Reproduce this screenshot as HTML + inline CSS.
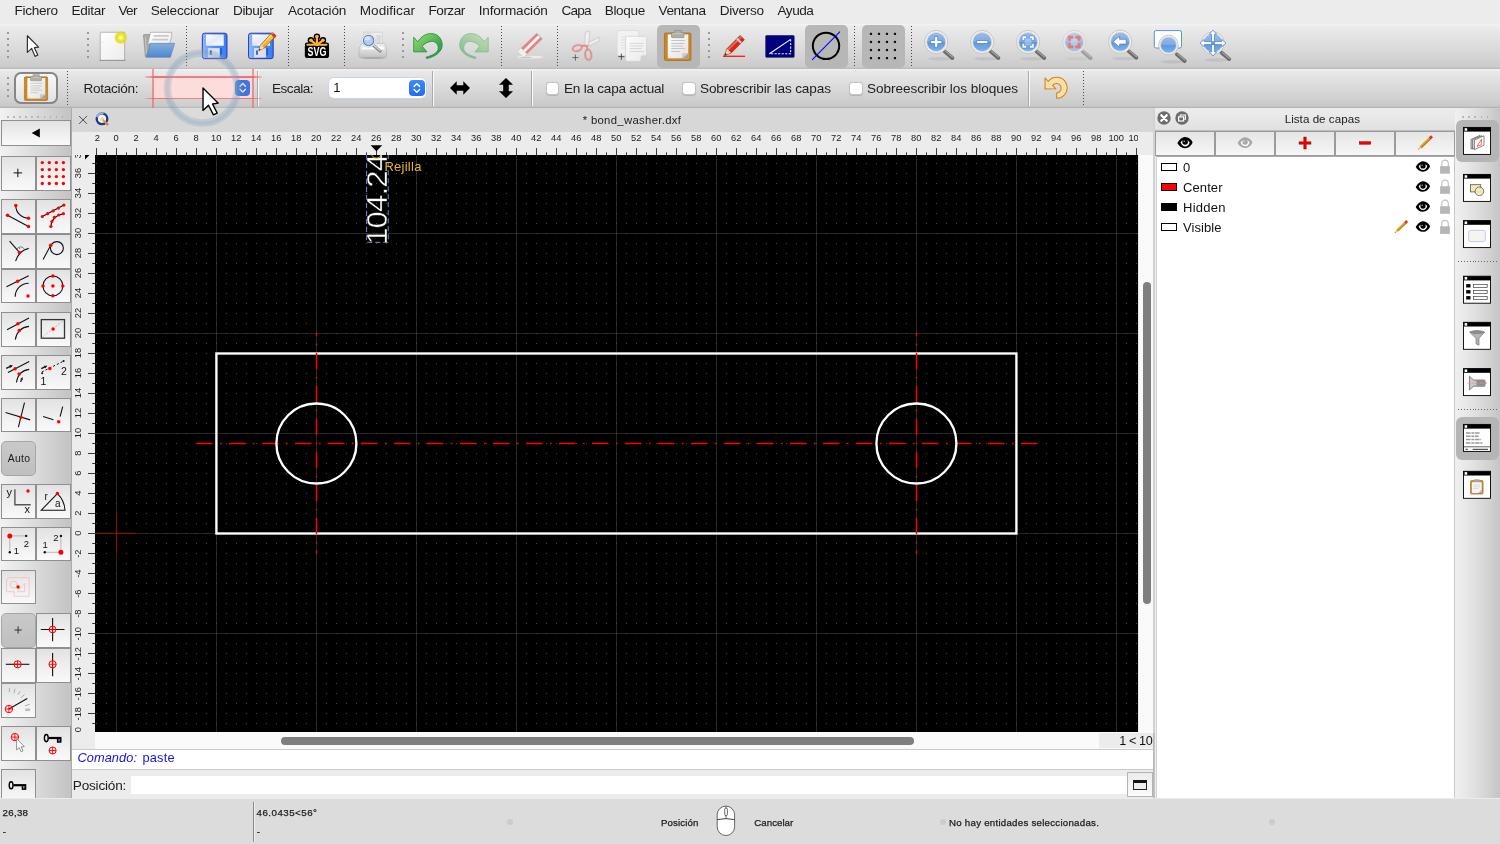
<!DOCTYPE html>
<html lang="es"><head><meta charset="utf-8"><title>QCAD - bond_washer.dxf</title><style>
html,body{margin:0;padding:0;}
body{width:1500px;height:844px;overflow:hidden;background:#ececec;font-family:"Liberation Sans",sans-serif;position:relative;}
#app{position:absolute;left:0;top:0;width:1500px;height:844px;overflow:hidden;will-change:transform;}
.t{position:absolute;white-space:nowrap;line-height:1;}
svg{position:absolute;overflow:visible;}
svg text{font-family:"Liberation Sans",sans-serif;}
</style></head><body><div id="app">
<div style="position:absolute;left:0px;top:0px;width:1500px;height:23px;background:#ececec;"></div>
<span class="t" style="left:14.60px;top:4.49px;font-size:13.60px;letter-spacing:-0.292px;color:#1e1e1e;">Fichero</span>
<span class="t" style="left:71.40px;top:4.49px;font-size:13.60px;letter-spacing:-0.266px;color:#1e1e1e;">Editar</span>
<span class="t" style="left:118.50px;top:4.49px;font-size:13.60px;letter-spacing:-0.707px;color:#1e1e1e;">Ver</span>
<span class="t" style="left:150.70px;top:4.49px;font-size:13.60px;letter-spacing:-0.246px;color:#1e1e1e;">Seleccionar</span>
<span class="t" style="left:233.00px;top:4.49px;font-size:13.60px;letter-spacing:-0.364px;color:#1e1e1e;">Dibujar</span>
<span class="t" style="left:287.90px;top:4.49px;font-size:13.60px;letter-spacing:-0.153px;color:#1e1e1e;">Acotación</span>
<span class="t" style="left:359.80px;top:4.49px;font-size:13.60px;letter-spacing:0.004px;color:#1e1e1e;">Modificar</span>
<span class="t" style="left:428.60px;top:4.49px;font-size:13.60px;letter-spacing:-0.539px;color:#1e1e1e;">Forzar</span>
<span class="t" style="left:478.70px;top:4.49px;font-size:13.60px;letter-spacing:-0.186px;color:#1e1e1e;">Información</span>
<span class="t" style="left:561.60px;top:4.49px;font-size:13.60px;letter-spacing:-0.871px;color:#1e1e1e;">Capa</span>
<span class="t" style="left:604.70px;top:4.49px;font-size:13.60px;letter-spacing:-0.350px;color:#1e1e1e;">Bloque</span>
<span class="t" style="left:658.50px;top:4.49px;font-size:13.60px;letter-spacing:-0.403px;color:#1e1e1e;">Ventana</span>
<span class="t" style="left:719.80px;top:4.49px;font-size:13.60px;letter-spacing:-0.317px;color:#1e1e1e;">Diverso</span>
<span class="t" style="left:777.50px;top:4.49px;font-size:13.60px;letter-spacing:-0.479px;color:#1e1e1e;">Ayuda</span>
<div style="position:absolute;left:0px;top:23.5px;width:1500px;height:45.5px;background:linear-gradient(#f5f5f5 0%,#ececec 4%,#dcdcdc 50%,#cbcbcb 96%,#b3b3b3 100%);"></div>
<div style="position:absolute;left:0px;top:69px;width:1500px;height:38.5px;background:linear-gradient(#f5f5f5 0%,#e9e9e9 5%,#d9d9d9 50%,#c9c9c9 95%,#adadad 100%);"></div>
<div style="position:absolute;left:6.9px;top:31.9px;width:2.2px;height:2.2px;background:#929292;border-radius:0.6px"></div><div style="position:absolute;left:6.9px;top:37.9px;width:2.2px;height:2.2px;background:#929292;border-radius:0.6px"></div><div style="position:absolute;left:6.9px;top:43.9px;width:2.2px;height:2.2px;background:#929292;border-radius:0.6px"></div><div style="position:absolute;left:6.9px;top:49.9px;width:2.2px;height:2.2px;background:#929292;border-radius:0.6px"></div><div style="position:absolute;left:6.9px;top:55.9px;width:2.2px;height:2.2px;background:#929292;border-radius:0.6px"></div>
<div style="position:absolute;left:86.9px;top:31.9px;width:2.2px;height:2.2px;background:#929292;border-radius:0.6px"></div><div style="position:absolute;left:86.9px;top:37.9px;width:2.2px;height:2.2px;background:#929292;border-radius:0.6px"></div><div style="position:absolute;left:86.9px;top:43.9px;width:2.2px;height:2.2px;background:#929292;border-radius:0.6px"></div><div style="position:absolute;left:86.9px;top:49.9px;width:2.2px;height:2.2px;background:#929292;border-radius:0.6px"></div><div style="position:absolute;left:86.9px;top:55.9px;width:2.2px;height:2.2px;background:#929292;border-radius:0.6px"></div>
<div style="position:absolute;left:401.8px;top:31.9px;width:2.2px;height:2.2px;background:#929292;border-radius:0.6px"></div><div style="position:absolute;left:401.8px;top:37.9px;width:2.2px;height:2.2px;background:#929292;border-radius:0.6px"></div><div style="position:absolute;left:401.8px;top:43.9px;width:2.2px;height:2.2px;background:#929292;border-radius:0.6px"></div><div style="position:absolute;left:401.8px;top:49.9px;width:2.2px;height:2.2px;background:#929292;border-radius:0.6px"></div><div style="position:absolute;left:401.8px;top:55.9px;width:2.2px;height:2.2px;background:#929292;border-radius:0.6px"></div>
<div style="position:absolute;left:707.9px;top:31.9px;width:2.2px;height:2.2px;background:#929292;border-radius:0.6px"></div><div style="position:absolute;left:707.9px;top:37.9px;width:2.2px;height:2.2px;background:#929292;border-radius:0.6px"></div><div style="position:absolute;left:707.9px;top:43.9px;width:2.2px;height:2.2px;background:#929292;border-radius:0.6px"></div><div style="position:absolute;left:707.9px;top:49.9px;width:2.2px;height:2.2px;background:#929292;border-radius:0.6px"></div><div style="position:absolute;left:707.9px;top:55.9px;width:2.2px;height:2.2px;background:#929292;border-radius:0.6px"></div>
<div style="position:absolute;left:186px;top:26px;width:1px;height:40.5px;background:repeating-linear-gradient(#484848 0 1.3px,transparent 1.3px 3px);"></div>
<div style="position:absolute;left:288px;top:26px;width:1px;height:40.5px;background:repeating-linear-gradient(#484848 0 1.3px,transparent 1.3px 3px);"></div>
<div style="position:absolute;left:344px;top:26px;width:1px;height:40.5px;background:repeating-linear-gradient(#484848 0 1.3px,transparent 1.3px 3px);"></div>
<div style="position:absolute;left:501px;top:26px;width:1px;height:40.5px;background:repeating-linear-gradient(#484848 0 1.3px,transparent 1.3px 3px);"></div>
<div style="position:absolute;left:557px;top:26px;width:1px;height:40.5px;background:repeating-linear-gradient(#484848 0 1.3px,transparent 1.3px 3px);"></div>
<div style="position:absolute;left:854px;top:26px;width:1px;height:40.5px;background:repeating-linear-gradient(#484848 0 1.3px,transparent 1.3px 3px);"></div>
<div style="position:absolute;left:911px;top:26px;width:1px;height:40.5px;background:repeating-linear-gradient(#484848 0 1.3px,transparent 1.3px 3px);"></div>
<div style="position:absolute;left:6.9px;top:76.9px;width:2.2px;height:2.2px;background:#929292;border-radius:0.6px"></div><div style="position:absolute;left:6.9px;top:82.9px;width:2.2px;height:2.2px;background:#929292;border-radius:0.6px"></div><div style="position:absolute;left:6.9px;top:88.9px;width:2.2px;height:2.2px;background:#929292;border-radius:0.6px"></div><div style="position:absolute;left:6.9px;top:94.9px;width:2.2px;height:2.2px;background:#929292;border-radius:0.6px"></div>
<div style="position:absolute;left:67px;top:71px;width:1px;height:35px;background:repeating-linear-gradient(#484848 0 1.3px,transparent 1.3px 3px);"></div>
<div style="position:absolute;left:1083px;top:71px;width:1px;height:35px;background:repeating-linear-gradient(#484848 0 1.3px,transparent 1.3px 3px);"></div>
<div style="position:absolute;left:257px;top:71px;width:1px;height:35px;background:#aaa;"></div><div style="position:absolute;left:258px;top:71px;width:1px;height:35px;background:#fafafa;"></div>
<div style="position:absolute;left:432px;top:71px;width:1px;height:35px;background:#aaa;"></div><div style="position:absolute;left:433px;top:71px;width:1px;height:35px;background:#fafafa;"></div>
<div style="position:absolute;left:531px;top:71px;width:1px;height:35px;background:#aaa;"></div><div style="position:absolute;left:532px;top:71px;width:1px;height:35px;background:#fafafa;"></div>
<div style="position:absolute;left:1028px;top:71px;width:1px;height:35px;background:#aaa;"></div><div style="position:absolute;left:1029px;top:71px;width:1px;height:35px;background:#fafafa;"></div>
<div style="position:absolute;left:657px;top:25px;width:43px;height:43px;background:#b7b7b7;border-radius:5px;"></div>
<div style="position:absolute;left:805px;top:25px;width:43px;height:43px;background:#b7b7b7;border-radius:5px;"></div>
<div style="position:absolute;left:862px;top:25px;width:43px;height:43px;background:#b7b7b7;border-radius:5px;"></div>
<span class="t" style="left:83.50px;top:82.49px;font-size:13.60px;letter-spacing:-0.307px;color:#1e1e1e;">Rotación:</span>
<span class="t" style="left:272.00px;top:82.29px;font-size:13.60px;letter-spacing:-0.500px;color:#1e1e1e;">Escala:</span>
<span class="t" style="left:564.00px;top:81.69px;font-size:13.60px;letter-spacing:-0.246px;color:#1e1e1e;">En la capa actual</span>
<span class="t" style="left:700.00px;top:81.69px;font-size:13.60px;letter-spacing:-0.133px;color:#1e1e1e;">Sobrescribir las capas</span>
<span class="t" style="left:867.00px;top:81.69px;font-size:13.60px;letter-spacing:-0.071px;color:#1e1e1e;">Sobreescribir los bloques</span>
<div style="position:absolute;left:545.5px;top:81.5px;width:11.5px;height:11.5px;background:#fff;border:1px solid #c4c4c4;border-radius:3.5px;box-shadow:0 0.5px 1px rgba(0,0,0,.15);"></div>
<div style="position:absolute;left:682px;top:81.5px;width:11.5px;height:11.5px;background:#fff;border:1px solid #c4c4c4;border-radius:3.5px;box-shadow:0 0.5px 1px rgba(0,0,0,.15);"></div>
<div style="position:absolute;left:849px;top:81.5px;width:11.5px;height:11.5px;background:#fff;border:1px solid #c4c4c4;border-radius:3.5px;box-shadow:0 0.5px 1px rgba(0,0,0,.15);"></div>
<div style="position:absolute;left:14.2px;top:72.2px;width:44px;height:32.2px;border:2px solid #868686;border-radius:7px;background:linear-gradient(#f8f8f8,#e2e2e2);box-sizing:border-box;"></div>
<div style="position:absolute;left:153.6px;top:77.5px;width:98.8px;height:21px;background:#fdd8d8;border-radius:4px;"></div>
<div style="position:absolute;left:145px;top:76.4px;width:117px;height:1.6px;background:linear-gradient(90deg,rgba(240,110,110,.3),#f07272 8%,#f07272 92%,rgba(240,110,110,.3));"></div>
<div style="position:absolute;left:145px;top:97.9px;width:117px;height:1.6px;background:linear-gradient(90deg,rgba(240,110,110,.3),#f07272 8%,#f07272 92%,rgba(240,110,110,.3));"></div>
<div style="position:absolute;left:152.3px;top:69px;width:1.5px;height:38.5px;background:rgba(240,100,100,.6);"></div>
<div style="position:absolute;left:252.3px;top:69px;width:1.5px;height:38.5px;background:rgba(240,100,100,.6);"></div>
<div style="position:absolute;left:234.5px;top:80px;width:15.5px;height:15.5px;background:#3d76dc;border-radius:4px;"><svg width="15.5" height="15.5" viewBox="0 0 15.5 15.5" style="left:0;top:0"><path d="M5 6.3 L7.75 3.6 L10.5 6.3 M5 9.3 L7.75 12 L10.5 9.3" fill="none" stroke="#f4d9de" stroke-width="1.4" stroke-linecap="round" stroke-linejoin="round"/></svg></div>
<div style="position:absolute;left:329px;top:77.5px;width:97px;height:20px;background:#fff;border-radius:5px;box-shadow:0 0 0 1px #c9d6ea, 0 1px 1px rgba(0,0,0,.1);"></div>
<span class="t" style="left:333.20px;top:80.80px;font-size:13.00px;color:#111;">1</span>
<div style="position:absolute;left:409.3px;top:80px;width:15.7px;height:15.7px;background:linear-gradient(#3d8bfb,#1f6df2);border-radius:4px;"><svg width="15.7" height="15.7" viewBox="0 0 15.5 15.5" style="left:0;top:0"><path d="M5 6.3 L7.75 3.6 L10.5 6.3 M5 9.3 L7.75 12 L10.5 9.3" fill="none" stroke="#fff" stroke-width="1.4" stroke-linecap="round" stroke-linejoin="round"/></svg></div>
<div style="position:absolute;left:72px;top:107.5px;width:1083px;height:24px;background:#d7d7d7;"></div>
<span class="t" style="left:582.70px;top:114.73px;font-size:11.30px;letter-spacing:0.333px;color:#1c1c1c;">* bond_washer.dxf</span>
<div style="position:absolute;left:72px;top:732px;width:1083px;height:17px;background:#ececec;"></div>
<div style="position:absolute;left:95px;top:732px;width:1060px;height:17px;background:#fafafa;"></div>
<div style="position:absolute;left:281px;top:736.5px;width:633px;height:8px;background:#7f7f7f;border-radius:4px;"></div>
<div style="position:absolute;left:1099px;top:733px;width:54.5px;height:14.5px;background:#ececec;"></div>
<span class="t" style="left:1119.20px;top:734.73px;font-size:12.60px;letter-spacing:-0.356px;color:#111;">1 &lt; 10</span>
<div style="position:absolute;left:1138px;top:155px;width:15.5px;height:577px;background:#fafafa;border-left:1px solid #e6e6e6;box-sizing:border-box;"></div>
<div style="position:absolute;left:1142.5px;top:282px;width:8px;height:322px;background:#7f7f7f;border-radius:4px;"></div>
<div style="position:absolute;left:72px;top:749px;width:1083px;height:21px;background:#fff;border-top:1px solid #c9c9c9;border-bottom:1px solid #c9c9c9;box-sizing:border-box;"></div>
<span class="t" style="left:77.40px;top:752.16px;font-size:12.80px;letter-spacing:0.078px;font-style:italic;color:#1414e0;">Comando:</span>
<span class="t" style="left:142.50px;top:752.16px;font-size:12.80px;letter-spacing:0.172px;color:#1414e0;">paste</span>
<div style="position:absolute;left:72px;top:770px;width:1083px;height:28px;background:#ececec;"></div>
<span class="t" style="left:72.80px;top:778.69px;font-size:13.60px;letter-spacing:-0.210px;color:#1c1c1c;">Posición:</span>
<div style="position:absolute;left:131px;top:776px;width:996px;height:18.2px;background:#fff;"></div>
<div style="position:absolute;left:1127px;top:772.2px;width:25.5px;height:25.3px;background:linear-gradient(#ececec,#fbfbfb);border:1px solid #b4b4b4;box-sizing:border-box;"><div style="position:absolute;left:5px;top:7px;width:14px;height:10px;border:1px solid #222;border-top:3px solid #111;box-sizing:border-box;background:#ececec"></div></div>
<svg width="40" height="20" viewBox="76 110 40 20" style="left:76px;top:110px"><path d="M79 115.9L87 123.9M87 115.9L79 123.9" stroke="#444" stroke-width="0.95" fill="none"/><circle cx="102" cy="118.8" r="5.3" fill="#fbfbfb" stroke="#1d3c8c" stroke-width="2.4"/><path d="M96.9 117.2A5.3 5.3 0 0 1 103.5 113.7" fill="none" stroke="#9db0d8" stroke-width="2.4"/><path d="M98.5 118.8H105.5M102 115.3V122.3" stroke="#c9c9c9" stroke-width="0.5"/><path d="M99.5 120.6L104.2 116.4" stroke="#f0a0a0" stroke-width="0.5"/><path d="M102.3 119.1L106.9 123.9" stroke="#f2a20c" stroke-width="2" stroke-linecap="butt"/><circle cx="107.3" cy="124.3" r="1.2" fill="#e86a6a"/><path d="M101.6 118.4L103.4 119L102.2 120.2Z" fill="#f4e4c0"/></svg>
<svg width="1043" height="23" viewBox="95 132 1043 23" style="left:95px;top:132px;overflow:hidden"><rect x="95" y="132" width="1043" height="23" fill="#ececec"/><path d="M96.5 148V155M106.5 152.3V155M116.5 148V155M126.5 152.3V155M136.5 148V155M146.5 152.3V155M156.5 148V155M166.5 152.3V155M176.5 148V155M186.5 152.3V155M196.5 148V155M206.5 152.3V155M216.5 148V155M226.5 152.3V155M236.5 148V155M246.5 152.3V155M256.5 148V155M266.5 152.3V155M276.5 148V155M286.5 152.3V155M296.5 148V155M306.5 152.3V155M316.5 148V155M326.5 152.3V155M336.5 148V155M346.5 152.3V155M356.5 148V155M366.5 152.3V155M376.5 148V155M386.5 152.3V155M396.5 148V155M406.5 152.3V155M416.5 148V155M426.5 152.3V155M436.5 148V155M446.5 152.3V155M456.5 148V155M466.5 152.3V155M476.5 148V155M486.5 152.3V155M496.5 148V155M506.5 152.3V155M516.5 148V155M526.5 152.3V155M536.5 148V155M546.5 152.3V155M556.5 148V155M566.5 152.3V155M576.5 148V155M586.5 152.3V155M596.5 148V155M606.5 152.3V155M616.5 148V155M626.5 152.3V155M636.5 148V155M646.5 152.3V155M656.5 148V155M666.5 152.3V155M676.5 148V155M686.5 152.3V155M696.5 148V155M706.5 152.3V155M716.5 148V155M726.5 152.3V155M736.5 148V155M746.5 152.3V155M756.5 148V155M766.5 152.3V155M776.5 148V155M786.5 152.3V155M796.5 148V155M806.5 152.3V155M816.5 148V155M826.5 152.3V155M836.5 148V155M846.5 152.3V155M856.5 148V155M866.5 152.3V155M876.5 148V155M886.5 152.3V155M896.5 148V155M906.5 152.3V155M916.5 148V155M926.5 152.3V155M936.5 148V155M946.5 152.3V155M956.5 148V155M966.5 152.3V155M976.5 148V155M986.5 152.3V155M996.5 148V155M1006.5 152.3V155M1016.5 148V155M1026.5 152.3V155M1036.5 148V155M1046.5 152.3V155M1056.5 148V155M1066.5 152.3V155M1076.5 148V155M1086.5 152.3V155M1096.5 148V155M1106.5 152.3V155M1116.5 148V155M1126.5 152.3V155M1136.5 148V155" stroke="#3c3c3c" stroke-width="1" fill="none"/><g font-size="9.3" fill="#1a1a1a" text-anchor="middle"><text x="95.9" y="140.7">-2</text><text x="116.2" y="140.7">0</text><text x="136.2" y="140.7">2</text><text x="156.2" y="140.7">4</text><text x="176.2" y="140.7">6</text><text x="196.2" y="140.7">8</text><text x="216.2" y="140.7">10</text><text x="236.2" y="140.7">12</text><text x="256.2" y="140.7">14</text><text x="276.2" y="140.7">16</text><text x="296.2" y="140.7">18</text><text x="316.2" y="140.7">20</text><text x="336.2" y="140.7">22</text><text x="356.2" y="140.7">24</text><text x="376.2" y="140.7">26</text><text x="396.2" y="140.7">28</text><text x="416.2" y="140.7">30</text><text x="436.2" y="140.7">32</text><text x="456.2" y="140.7">34</text><text x="476.2" y="140.7">36</text><text x="496.2" y="140.7">38</text><text x="516.2" y="140.7">40</text><text x="536.2" y="140.7">42</text><text x="556.2" y="140.7">44</text><text x="576.2" y="140.7">46</text><text x="596.2" y="140.7">48</text><text x="616.2" y="140.7">50</text><text x="636.2" y="140.7">52</text><text x="656.2" y="140.7">54</text><text x="676.2" y="140.7">56</text><text x="696.2" y="140.7">58</text><text x="716.2" y="140.7">60</text><text x="736.2" y="140.7">62</text><text x="756.2" y="140.7">64</text><text x="776.2" y="140.7">66</text><text x="796.2" y="140.7">68</text><text x="816.2" y="140.7">70</text><text x="836.2" y="140.7">72</text><text x="856.2" y="140.7">74</text><text x="876.2" y="140.7">76</text><text x="896.2" y="140.7">78</text><text x="916.2" y="140.7">80</text><text x="936.2" y="140.7">82</text><text x="956.2" y="140.7">84</text><text x="976.2" y="140.7">86</text><text x="996.2" y="140.7">88</text><text x="1016.2" y="140.7">90</text><text x="1036.2" y="140.7">92</text><text x="1056.2" y="140.7">94</text><text x="1076.2" y="140.7">96</text><text x="1096.2" y="140.7">98</text><text x="1116.2" y="140.7">100</text><text x="1136.2" y="140.7">102</text></g><path d="M370.6 145.3H382.2L376.4 151.2Z" fill="#000"/></svg>
<svg width="23" height="577" viewBox="72 155 23 577" style="left:72px;top:155px;overflow:hidden"><rect x="72" y="155" width="23" height="577" fill="#ececec"/><path d="M88 733.5H95M92.2 723.5H95M88 713.5H95M92.2 703.5H95M88 693.5H95M92.2 683.5H95M88 673.5H95M92.2 663.5H95M88 653.5H95M92.2 643.5H95M88 633.5H95M92.2 623.5H95M88 613.5H95M92.2 603.5H95M88 593.5H95M92.2 583.5H95M88 573.5H95M92.2 563.5H95M88 553.5H95M92.2 543.5H95M88 533.5H95M92.2 523.5H95M88 513.5H95M92.2 503.5H95M88 493.5H95M92.2 483.5H95M88 473.5H95M92.2 463.5H95M88 453.5H95M92.2 443.5H95M88 433.5H95M92.2 423.5H95M88 413.5H95M92.2 403.5H95M88 393.5H95M92.2 383.5H95M88 373.5H95M92.2 363.5H95M88 353.5H95M92.2 343.5H95M88 333.5H95M92.2 323.5H95M88 313.5H95M92.2 303.5H95M88 293.5H95M92.2 283.5H95M88 273.5H95M92.2 263.5H95M88 253.5H95M92.2 243.5H95M88 233.5H95M92.2 223.5H95M88 213.5H95M92.2 203.5H95M88 193.5H95M92.2 183.5H95M88 173.5H95M92.2 163.5H95M88 153.5H95" stroke="#3c3c3c" stroke-width="1" fill="none"/><g font-size="9.3" fill="#1a1a1a" text-anchor="middle"><text transform="translate(80.9 733.7) rotate(-90)" x="0" y="0">-20</text><text transform="translate(80.9 713.7) rotate(-90)" x="0" y="0">-18</text><text transform="translate(80.9 693.7) rotate(-90)" x="0" y="0">-16</text><text transform="translate(80.9 673.7) rotate(-90)" x="0" y="0">-14</text><text transform="translate(80.9 653.7) rotate(-90)" x="0" y="0">-12</text><text transform="translate(80.9 633.7) rotate(-90)" x="0" y="0">-10</text><text transform="translate(80.9 613.7) rotate(-90)" x="0" y="0">-8</text><text transform="translate(80.9 593.7) rotate(-90)" x="0" y="0">-6</text><text transform="translate(80.9 573.7) rotate(-90)" x="0" y="0">-4</text><text transform="translate(80.9 553.7) rotate(-90)" x="0" y="0">-2</text><text transform="translate(80.9 533.1) rotate(-90)" x="0" y="0">0</text><text transform="translate(80.9 513.1) rotate(-90)" x="0" y="0">2</text><text transform="translate(80.9 493.1) rotate(-90)" x="0" y="0">4</text><text transform="translate(80.9 473.1) rotate(-90)" x="0" y="0">6</text><text transform="translate(80.9 453.1) rotate(-90)" x="0" y="0">8</text><text transform="translate(80.9 433.1) rotate(-90)" x="0" y="0">10</text><text transform="translate(80.9 413.1) rotate(-90)" x="0" y="0">12</text><text transform="translate(80.9 393.1) rotate(-90)" x="0" y="0">14</text><text transform="translate(80.9 373.1) rotate(-90)" x="0" y="0">16</text><text transform="translate(80.9 353.1) rotate(-90)" x="0" y="0">18</text><text transform="translate(80.9 333.1) rotate(-90)" x="0" y="0">20</text><text transform="translate(80.9 313.1) rotate(-90)" x="0" y="0">22</text><text transform="translate(80.9 293.1) rotate(-90)" x="0" y="0">24</text><text transform="translate(80.9 273.1) rotate(-90)" x="0" y="0">26</text><text transform="translate(80.9 253.1) rotate(-90)" x="0" y="0">28</text><text transform="translate(80.9 233.1) rotate(-90)" x="0" y="0">30</text><text transform="translate(80.9 213.1) rotate(-90)" x="0" y="0">32</text><text transform="translate(80.9 193.1) rotate(-90)" x="0" y="0">34</text><text transform="translate(80.9 173.1) rotate(-90)" x="0" y="0">36</text><text transform="translate(80.9 153.1) rotate(-90)" x="0" y="0">38</text></g><path d="M85 155H89.5L85 159.5Z" fill="#000"/></svg>
<div style="position:absolute;left:72px;top:132px;width:23px;height:23px;background:#ececec;"></div>
<svg width="1043" height="577" viewBox="95 155 1043 577" style="left:95px;top:155px;overflow:hidden;background:#000"><defs><pattern id="gd" x="116" y="533" width="10" height="10" patternUnits="userSpaceOnUse"><rect x="0" y="0" width="1" height="1" fill="#474747"/></pattern></defs><rect x="95" y="155" width="1043" height="577" fill="#000"/><rect x="116" y="155" width="1" height="577" fill="#262626"/><rect x="216" y="155" width="1" height="577" fill="#262626"/><rect x="316" y="155" width="1" height="577" fill="#262626"/><rect x="416" y="155" width="1" height="577" fill="#262626"/><rect x="516" y="155" width="1" height="577" fill="#262626"/><rect x="616" y="155" width="1" height="577" fill="#262626"/><rect x="716" y="155" width="1" height="577" fill="#262626"/><rect x="816" y="155" width="1" height="577" fill="#262626"/><rect x="916" y="155" width="1" height="577" fill="#262626"/><rect x="1016" y="155" width="1" height="577" fill="#262626"/><rect x="1116" y="155" width="1" height="577" fill="#262626"/><rect x="95" y="633" width="1043" height="1" fill="#262626"/><rect x="95" y="533" width="1043" height="1" fill="#262626"/><rect x="95" y="433" width="1043" height="1" fill="#262626"/><rect x="95" y="333" width="1043" height="1" fill="#262626"/><rect x="95" y="233" width="1043" height="1" fill="#262626"/><rect x="95" y="155" width="1043" height="577" fill="url(#gd)"/><path d="M95 533.5H137M116.5 513V554" stroke="#a00606" stroke-width="1" fill="none"/><rect x="216.4" y="353.5" width="800" height="180" fill="none" stroke="#fff" stroke-width="2.35"/><path d="M196.00 443.50H212.50M229.00 443.50H245.50M262.00 443.50H278.50M295.00 443.50H311.50M328.00 443.50H344.50M361.00 443.50H377.50M394.00 443.50H410.50M427.00 443.50H443.50M460.00 443.50H476.50M493.00 443.50H509.50M526.00 443.50H542.50M559.00 443.50H575.50M592.00 443.50H608.50M625.00 443.50H641.50M658.00 443.50H674.50M691.00 443.50H707.50M724.00 443.50H740.50M757.00 443.50H773.50M790.00 443.50H806.50M823.00 443.50H839.50M856.00 443.50H872.50M889.00 443.50H905.50M922.00 443.50H938.50M955.00 443.50H971.50M988.00 443.50H1004.50M1021.00 443.50H1037.50M219.95 443.50h1.6M252.95 443.50h1.6M285.95 443.50h1.6M318.95 443.50h1.6M351.95 443.50h1.6M384.95 443.50h1.6M417.95 443.50h1.6M450.95 443.50h1.6M483.95 443.50h1.6M516.95 443.50h1.6M549.95 443.50h1.6M582.95 443.50h1.6M615.95 443.50h1.6M648.95 443.50h1.6M681.95 443.50h1.6M714.95 443.50h1.6M747.95 443.50h1.6M780.95 443.50h1.6M813.95 443.50h1.6M846.95 443.50h1.6M879.95 443.50h1.6M912.95 443.50h1.6M945.95 443.50h1.6M978.95 443.50h1.6M1011.95 443.50h1.6M316.50 333.00V336.25M316.50 343.70V345.30M316.50 352.75V369.25M316.50 376.70V378.30M316.50 385.75V402.25M316.50 409.70V411.30M316.50 418.75V435.25M316.50 442.70V444.30M316.50 451.75V468.25M316.50 475.70V477.30M316.50 484.75V501.25M316.50 508.70V510.30M316.50 517.75V534.25M316.50 541.70V543.30M316.50 550.75V553.80M916.50 333.00V336.25M916.50 343.70V345.30M916.50 352.75V369.25M916.50 376.70V378.30M916.50 385.75V402.25M916.50 409.70V411.30M916.50 418.75V435.25M916.50 442.70V444.30M916.50 451.75V468.25M916.50 475.70V477.30M916.50 484.75V501.25M916.50 508.70V510.30M916.50 517.75V534.25M916.50 541.70V543.30M916.50 550.75V553.80" stroke="#ff0000" stroke-width="1.5" fill="none"/><circle cx="316.4" cy="443.5" r="40" fill="none" stroke="#fff" stroke-width="2.35"/><circle cx="916.4" cy="443.5" r="40" fill="none" stroke="#fff" stroke-width="2.35"/><path d="M366.6 155V242.3H388.2V155" fill="none" stroke="#6f8fd0" stroke-width="1" stroke-dasharray="5 3"/><text transform="translate(387.4 244.8) rotate(-90) scale(1.075 1)" font-size="29" fill="#fff" stroke="#000" stroke-width="0.45" textLength="84.5" lengthAdjust="spacing">104.24</text><circle cx="376.4" cy="153.2" r="5" fill="none" stroke="#e0a91f" stroke-width="1"/><text x="384.4" y="171.4" font-size="13" fill="#e8b322" textLength="37" lengthAdjust="spacing">Rejilla</text></svg>
<div style="position:absolute;left:0px;top:107.5px;width:71.5px;height:691px;background:linear-gradient(90deg,#f2f2f2 0%,#e2e2e2 35%,#cccccc 80%,#c2c2c2 100%);"></div>
<div style="position:absolute;left:70.6px;top:107.5px;width:1.4px;height:691px;background:#ababab;"></div>
<div style="position:absolute;left:7.0px;top:116.3px;width:1.6px;height:1.6px;background:#a8a8a8;border-radius:1px"></div><div style="position:absolute;left:13.1px;top:116.3px;width:1.6px;height:1.6px;background:#a8a8a8;border-radius:1px"></div><div style="position:absolute;left:19.2px;top:116.3px;width:1.6px;height:1.6px;background:#a8a8a8;border-radius:1px"></div><div style="position:absolute;left:25.2px;top:116.3px;width:1.6px;height:1.6px;background:#a8a8a8;border-radius:1px"></div><div style="position:absolute;left:31.3px;top:116.3px;width:1.6px;height:1.6px;background:#a8a8a8;border-radius:1px"></div><div style="position:absolute;left:37.4px;top:116.3px;width:1.6px;height:1.6px;background:#a8a8a8;border-radius:1px"></div><div style="position:absolute;left:43.5px;top:116.3px;width:1.6px;height:1.6px;background:#a8a8a8;border-radius:1px"></div><div style="position:absolute;left:49.6px;top:116.3px;width:1.6px;height:1.6px;background:#a8a8a8;border-radius:1px"></div><div style="position:absolute;left:55.6px;top:116.3px;width:1.6px;height:1.6px;background:#a8a8a8;border-radius:1px"></div><div style="position:absolute;left:61.7px;top:116.3px;width:1.6px;height:1.6px;background:#a8a8a8;border-radius:1px"></div>
<div style="position:absolute;left:1.2px;top:120.3px;width:69.5px;height:25.3px;background:linear-gradient(#e2e2e2 0%,#ebebeb 35%,#f3f3f3 70%,#f9f9f9 100%);border:1px solid #8f8f8f;box-sizing:border-box;"></div>
<div style="position:absolute;left:1.2px;top:156.4px;width:34.5px;height:34.5px;background:linear-gradient(#e2e2e2 0%,#ebebeb 35%,#f3f3f3 70%,#f9f9f9 100%);border:1px solid #8f8f8f;box-sizing:border-box;"></div>
<div style="position:absolute;left:36.2px;top:156.4px;width:34.5px;height:34.5px;background:linear-gradient(#e2e2e2 0%,#ebebeb 35%,#f3f3f3 70%,#f9f9f9 100%);border:1px solid #8f8f8f;box-sizing:border-box;"></div>
<div style="position:absolute;left:1.2px;top:199.4px;width:34.5px;height:34.5px;background:linear-gradient(#e2e2e2 0%,#ebebeb 35%,#f3f3f3 70%,#f9f9f9 100%);border:1px solid #8f8f8f;box-sizing:border-box;"></div>
<div style="position:absolute;left:36.2px;top:199.4px;width:34.5px;height:34.5px;background:linear-gradient(#e2e2e2 0%,#ebebeb 35%,#f3f3f3 70%,#f9f9f9 100%);border:1px solid #8f8f8f;box-sizing:border-box;"></div>
<div style="position:absolute;left:1.2px;top:234px;width:34.5px;height:34.5px;background:linear-gradient(#e2e2e2 0%,#ebebeb 35%,#f3f3f3 70%,#f9f9f9 100%);border:1px solid #8f8f8f;box-sizing:border-box;"></div>
<div style="position:absolute;left:36.2px;top:234px;width:34.5px;height:34.5px;background:linear-gradient(#e2e2e2 0%,#ebebeb 35%,#f3f3f3 70%,#f9f9f9 100%);border:1px solid #8f8f8f;box-sizing:border-box;"></div>
<div style="position:absolute;left:1.2px;top:268.6px;width:34.5px;height:34.5px;background:linear-gradient(#e2e2e2 0%,#ebebeb 35%,#f3f3f3 70%,#f9f9f9 100%);border:1px solid #8f8f8f;box-sizing:border-box;"></div>
<div style="position:absolute;left:36.2px;top:268.6px;width:34.5px;height:34.5px;background:linear-gradient(#e2e2e2 0%,#ebebeb 35%,#f3f3f3 70%,#f9f9f9 100%);border:1px solid #8f8f8f;box-sizing:border-box;"></div>
<div style="position:absolute;left:1.2px;top:312.3px;width:34.5px;height:34.5px;background:linear-gradient(#e2e2e2 0%,#ebebeb 35%,#f3f3f3 70%,#f9f9f9 100%);border:1px solid #8f8f8f;box-sizing:border-box;"></div>
<div style="position:absolute;left:36.2px;top:312.3px;width:34.5px;height:34.5px;background:linear-gradient(#e2e2e2 0%,#ebebeb 35%,#f3f3f3 70%,#f9f9f9 100%);border:1px solid #8f8f8f;box-sizing:border-box;"></div>
<div style="position:absolute;left:1.2px;top:355.3px;width:34.5px;height:34.5px;background:linear-gradient(#e2e2e2 0%,#ebebeb 35%,#f3f3f3 70%,#f9f9f9 100%);border:1px solid #8f8f8f;box-sizing:border-box;"></div>
<div style="position:absolute;left:36.2px;top:355.3px;width:34.5px;height:34.5px;background:linear-gradient(#e2e2e2 0%,#ebebeb 35%,#f3f3f3 70%,#f9f9f9 100%);border:1px solid #8f8f8f;box-sizing:border-box;"></div>
<div style="position:absolute;left:1.2px;top:397.8px;width:34.5px;height:34.5px;background:linear-gradient(#e2e2e2 0%,#ebebeb 35%,#f3f3f3 70%,#f9f9f9 100%);border:1px solid #8f8f8f;box-sizing:border-box;"></div>
<div style="position:absolute;left:36.2px;top:397.8px;width:34.5px;height:34.5px;background:linear-gradient(#e2e2e2 0%,#ebebeb 35%,#f3f3f3 70%,#f9f9f9 100%);border:1px solid #8f8f8f;box-sizing:border-box;"></div>
<div style="position:absolute;left:1.2px;top:441.3px;width:34.5px;height:34.5px;background:linear-gradient(#c9c9c9,#bfbfbf);border:1px solid #a6a6a6;border-radius:5px;box-sizing:border-box;"></div>
<div style="position:absolute;left:1.2px;top:484.3px;width:34.5px;height:34.5px;background:linear-gradient(#e2e2e2 0%,#ebebeb 35%,#f3f3f3 70%,#f9f9f9 100%);border:1px solid #8f8f8f;box-sizing:border-box;"></div>
<div style="position:absolute;left:36.2px;top:484.3px;width:34.5px;height:34.5px;background:linear-gradient(#e2e2e2 0%,#ebebeb 35%,#f3f3f3 70%,#f9f9f9 100%);border:1px solid #8f8f8f;box-sizing:border-box;"></div>
<div style="position:absolute;left:1.2px;top:526.8px;width:34.5px;height:34.5px;background:linear-gradient(#e2e2e2 0%,#ebebeb 35%,#f3f3f3 70%,#f9f9f9 100%);border:1px solid #8f8f8f;box-sizing:border-box;"></div>
<div style="position:absolute;left:36.2px;top:526.8px;width:34.5px;height:34.5px;background:linear-gradient(#e2e2e2 0%,#ebebeb 35%,#f3f3f3 70%,#f9f9f9 100%);border:1px solid #8f8f8f;box-sizing:border-box;"></div>
<div style="position:absolute;left:1.2px;top:569.8px;width:34.5px;height:34.5px;background:linear-gradient(#e2e2e2 0%,#ebebeb 35%,#f3f3f3 70%,#f9f9f9 100%);border:1px solid #8f8f8f;box-sizing:border-box;"></div>
<div style="position:absolute;left:1.2px;top:613.2px;width:34.5px;height:34.5px;background:linear-gradient(#c9c9c9,#bfbfbf);border:1px solid #a6a6a6;border-radius:5px;box-sizing:border-box;"></div>
<div style="position:absolute;left:36.2px;top:613.2px;width:34.5px;height:34.5px;background:linear-gradient(#e2e2e2 0%,#ebebeb 35%,#f3f3f3 70%,#f9f9f9 100%);border:1px solid #8f8f8f;box-sizing:border-box;"></div>
<div style="position:absolute;left:1.2px;top:648.2px;width:34.5px;height:34.5px;background:linear-gradient(#e2e2e2 0%,#ebebeb 35%,#f3f3f3 70%,#f9f9f9 100%);border:1px solid #8f8f8f;box-sizing:border-box;"></div>
<div style="position:absolute;left:36.2px;top:648.2px;width:34.5px;height:34.5px;background:linear-gradient(#e2e2e2 0%,#ebebeb 35%,#f3f3f3 70%,#f9f9f9 100%);border:1px solid #8f8f8f;box-sizing:border-box;"></div>
<div style="position:absolute;left:1.2px;top:683.2px;width:34.5px;height:34.5px;background:linear-gradient(#e2e2e2 0%,#ebebeb 35%,#f3f3f3 70%,#f9f9f9 100%);border:1px solid #8f8f8f;box-sizing:border-box;"></div>
<div style="position:absolute;left:1.2px;top:726.3px;width:34.5px;height:34.5px;background:linear-gradient(#e2e2e2 0%,#ebebeb 35%,#f3f3f3 70%,#f9f9f9 100%);border:1px solid #8f8f8f;box-sizing:border-box;"></div>
<div style="position:absolute;left:36.2px;top:726.3px;width:34.5px;height:34.5px;background:linear-gradient(#e2e2e2 0%,#ebebeb 35%,#f3f3f3 70%,#f9f9f9 100%);border:1px solid #8f8f8f;box-sizing:border-box;"></div>
<div style="position:absolute;left:1.2px;top:769px;width:34.5px;height:34.5px;background:linear-gradient(#e2e2e2 0%,#ebebeb 35%,#f3f3f3 70%,#f9f9f9 100%);border:1px solid #8f8f8f;box-sizing:border-box;"></div>
<span class="t" style="left:7.70px;top:453.60px;font-size:10.40px;letter-spacing:0.335px;color:#1a1a1a;">Auto</span>
<svg width="72" height="692" viewBox="0 107 72 692" style="left:0;top:107px;overflow:hidden"><path d="M31.7 133L39.8 128.6V137.4Z" fill="#000"/><path d="M13.6 172.9H22.1M17.85 168.7V177.2" fill="none" stroke="#111" stroke-width="1.00" /><circle cx="42.30" cy="162.60" r="1.65" fill="#ff0000"/><circle cx="42.30" cy="169.57" r="1.65" fill="#ff0000"/><circle cx="42.30" cy="176.54" r="1.65" fill="#ff0000"/><circle cx="42.30" cy="183.51" r="1.65" fill="#ff0000"/><circle cx="49.33" cy="162.60" r="1.65" fill="#ff0000"/><circle cx="49.33" cy="169.57" r="1.65" fill="#ff0000"/><circle cx="49.33" cy="176.54" r="1.65" fill="#ff0000"/><circle cx="49.33" cy="183.51" r="1.65" fill="#ff0000"/><circle cx="56.36" cy="162.60" r="1.65" fill="#ff0000"/><circle cx="56.36" cy="169.57" r="1.65" fill="#ff0000"/><circle cx="56.36" cy="176.54" r="1.65" fill="#ff0000"/><circle cx="56.36" cy="183.51" r="1.65" fill="#ff0000"/><circle cx="63.39" cy="162.60" r="1.65" fill="#ff0000"/><circle cx="63.39" cy="169.57" r="1.65" fill="#ff0000"/><circle cx="63.39" cy="176.54" r="1.65" fill="#ff0000"/><circle cx="63.39" cy="183.51" r="1.65" fill="#ff0000"/><path d="M7.5 215.3L28.5 226.5M15.8 205.4A12.7 12.7 0 0 0 28.5 218.2" fill="none" stroke="#111" stroke-width="1.10" /><circle cx="7.50" cy="215.30" r="1.75" fill="#ff0000"/><circle cx="28.50" cy="226.50" r="1.75" fill="#ff0000"/><circle cx="15.80" cy="205.40" r="1.75" fill="#ff0000"/><circle cx="28.50" cy="218.20" r="1.75" fill="#ff0000"/><path d="M42.3 216.5L63.9 205.1M50.9 226.5Q51.5 216 63.4 213.7" fill="none" stroke="#111" stroke-width="1.10" /><circle cx="42.30" cy="216.50" r="1.60" fill="#ff0000"/><circle cx="47.60" cy="213.70" r="1.60" fill="#ff0000"/><circle cx="53.10" cy="210.90" r="1.60" fill="#ff0000"/><circle cx="58.40" cy="208.10" r="1.60" fill="#ff0000"/><circle cx="63.90" cy="205.10" r="1.60" fill="#ff0000"/><circle cx="50.90" cy="226.50" r="1.60" fill="#ff0000"/><circle cx="51.90" cy="221.50" r="1.60" fill="#ff0000"/><circle cx="54.40" cy="217.30" r="1.60" fill="#ff0000"/><circle cx="58.70" cy="215.00" r="1.60" fill="#ff0000"/><circle cx="63.40" cy="213.70" r="1.60" fill="#ff0000"/><path d="M9.6 241.1L19.4 252.4M28.7 248.4Q19 250.5 15.6 261.2" fill="none" stroke="#111" stroke-width="1.10" /><path d="M16.8 249.3A4.2 4.2 0 0 1 24.4 249.2" fill="none" stroke="#333" stroke-width="0.60" /><circle cx="19.70" cy="248.20" r="0.50" fill="#333"/><circle cx="19.40" cy="252.40" r="1.75" fill="#ff0000"/><path d="M43.1 259.5L50.7 245.3" fill="none" stroke="#111" stroke-width="1.10" /><circle cx="56.9" cy="248.1" r="6.5" fill="none" stroke="#111" stroke-width="1.1"/><circle cx="50.70" cy="245.30" r="1.75" fill="#ff0000"/><path d="M6.5 286.7L28.7 275.8M28.7 283.2A13.5 13.5 0 0 0 15.2 296.7" fill="none" stroke="#111" stroke-width="1.10" /><circle cx="17.60" cy="281.20" r="1.75" fill="#ff0000"/><circle cx="28.00" cy="296.00" r="1.75" fill="#ff0000"/><circle cx="52.9" cy="285.9" r="9.9" fill="none" stroke="#111" stroke-width="1.1"/><circle cx="52.90" cy="285.90" r="1.75" fill="#ff0000"/><circle cx="62.80" cy="285.90" r="1.75" fill="#ff0000"/><circle cx="43.00" cy="285.90" r="1.75" fill="#ff0000"/><circle cx="52.90" cy="295.80" r="1.75" fill="#ff0000"/><circle cx="52.90" cy="276.00" r="1.75" fill="#ff0000"/><path d="M7 329.7L29 318.1M29 326.4Q17.5 327.5 15.3 339.7" fill="none" stroke="#111" stroke-width="1.10" /><circle cx="17.90" cy="323.80" r="1.75" fill="#ff0000"/><circle cx="19.30" cy="330.40" r="1.75" fill="#ff0000"/><rect x="41.3" y="319.6" width="23.2" height="18.6" fill="none" stroke="#333" stroke-width="1.3"/><path d="M42.5 337L63.5 320.6" fill="none" stroke="#b5b5b5" stroke-width="0.80" stroke-dasharray="2.5 1.5"/><circle cx="53.10" cy="329.00" r="1.75" fill="#ff0000"/><path d="M8 372.5L29.2 361.4M29.2 369.4Q18.5 370.5 16.4 382.5" fill="none" stroke="#111" stroke-width="1.10" /><circle cx="15.10" cy="368.70" r="1.75" fill="#ff0000"/><circle cx="19.10" cy="374.00" r="1.75" fill="#ff0000"/><path d="M6.2 368.4L10.5 366.3" fill="none" stroke="#111" stroke-width="1.30" /><path d="M12.9 365.2L9.3 365.1L10.6 367.9Z" fill="#111"/><path d="M20.6 382L21.5 379.8" fill="none" stroke="#111" stroke-width="1.20" /><path d="M22.6 376.9L20.2 379.2L22.8 380.3Z" fill="#111"/><path d="M41.8 372L64 360.9" fill="none" stroke="#111" stroke-width="1.00" stroke-dasharray="2.2 2"/><circle cx="63.60" cy="360.90" r="1.00" fill="#111"/><circle cx="42.20" cy="373.30" r="1.00" fill="#111"/><path d="M41.3 368.6L45 366.9" fill="none" stroke="#111" stroke-width="1.30" /><path d="M47.4 365.7L43.8 365.7L45.1 368.4Z" fill="#111"/><circle cx="49.80" cy="368.60" r="1.75" fill="#ff0000"/><text x="60.9" y="374.6" font-size="10.5" fill="#111">2</text><text x="40.6" y="384.7" font-size="10.5" fill="#111">1</text><path d="M5.5 412.5L30.2 419.9M24.5 402.6L18.4 427.1" fill="none" stroke="#111" stroke-width="1.10" /><circle cx="20.90" cy="417.20" r="1.75" fill="#ff0000"/><path d="M43.1 416.4L53.4 419.7M62.7 406.6L60.1 416.7" fill="none" stroke="#111" stroke-width="1.10" /><circle cx="58.70" cy="421.70" r="1.75" fill="#ff0000"/><path d="M14.9 489.3V504.7H30.7" fill="none" stroke="#555" stroke-width="1.40" /><circle cx="28.00" cy="490.90" r="1.75" fill="#ff0000"/><text x="6.6" y="495.6" font-size="11" fill="#111">y</text><text x="24.5" y="512.8" font-size="11" fill="#111">x</text><path d="M57.4 493.6L41.3 510.2H65Q64.5 500.5 57.4 493.6Z" fill="none" stroke="#111" stroke-width="1.10" /><circle cx="57.40" cy="493.60" r="1.75" fill="#ff0000"/><text x="44.6" y="500.1" font-size="10" fill="#111">r</text><text x="55.1" y="506.6" font-size="10" fill="#111">a</text><path d="M9.8 552.3V535.9H26.2" fill="none" stroke="#aaa" stroke-width="0.80" /><circle cx="9.80" cy="535.90" r="2.50" fill="#ff0000"/><circle cx="26.20" cy="535.90" r="1.20" fill="#111"/><circle cx="9.80" cy="552.30" r="1.20" fill="#111"/><text x="23.8" y="546.6" font-size="9.5" fill="#111">2</text><text x="13.7" y="554.2" font-size="9.5" fill="#111">1</text><path d="M60.9 535.9V552.3H44.8" fill="none" stroke="#aaa" stroke-width="0.80" /><circle cx="60.90" cy="552.30" r="2.50" fill="#ff0000"/><circle cx="60.90" cy="535.90" r="1.20" fill="#111"/><circle cx="44.80" cy="552.30" r="1.20" fill="#111"/><text x="53.2" y="540.5" font-size="9.5" fill="#111">2</text><text x="42.4" y="548.1" font-size="9.5" fill="#111">1</text><path d="M10 577.6H29.2V596.2H14.1V591.7H6.5V581.1Q6.5 577.6 10 577.6Z" fill="none" stroke="#f4b4b4" stroke-width="0.70" /><circle cx="13.6" cy="584.7" r="3.5" fill="none" stroke="#f4b4b4" stroke-width="0.7"/><path d="M24.7 583.6V591.7H17.6Z" fill="none" stroke="#f4b4b4" stroke-width="0.70" /><circle cx="18.10" cy="587.00" r="1.70" fill="#ff0000"/><path d="M14.5 630H21.7M18.1 626.4V633.6" fill="none" stroke="#333" stroke-width="1.00" /><path d="M40.8 629.5H64.5M52.6 617.9V641.3" fill="none" stroke="#111" stroke-width="1.10" /><circle cx="52.60" cy="629.50" r="3.40" fill="none" stroke="#ff0000" stroke-width="1"/><path d="M49.20 629.50H56.00M52.60 626.10V632.90" fill="none" stroke="#ff0000" stroke-width="0.90" /><path d="M5.8 664.3H29.4" fill="none" stroke="#111" stroke-width="1.10" /><circle cx="17.60" cy="664.30" r="3.60" fill="none" stroke="#ff0000" stroke-width="1"/><path d="M14.00 664.30H21.20M17.60 660.70V667.90" fill="none" stroke="#ff0000" stroke-width="0.90" /><path d="M52.6 652.9V676.2" fill="none" stroke="#111" stroke-width="1.10" /><circle cx="52.60" cy="664.30" r="3.60" fill="none" stroke="#ff0000" stroke-width="1"/><path d="M49.00 664.30H56.20M52.60 660.70V667.90" fill="none" stroke="#ff0000" stroke-width="0.90" /><path d="M8.9 709L27.2 698.4" fill="none" stroke="#111" stroke-width="1.10" /><circle cx="8.90" cy="709.00" r="3.70" fill="none" stroke="#ff0000" stroke-width="1"/><path d="M5.20 709.00H12.60M8.90 705.30V712.70" fill="none" stroke="#ff0000" stroke-width="0.90" /><path d="M9.4 688.1V692.3M15.1 688.8L13.9 693.1M20.1 691.3L17.9 694.8M24.5 694.3L21.1 697.9M29.7 704.4L25.2 705.7M30 709.1H25.2M30 710.3H25.2" fill="none" stroke="#9a9a9a" stroke-width="0.80" /><circle cx="14.90" cy="737.10" r="3.70" fill="none" stroke="#ff0000" stroke-width="1"/><path d="M11.20 737.10H18.60M14.90 733.40V740.80" fill="none" stroke="#ff0000" stroke-width="0.90" /><path d="M16.6 738.6V750L19.2 747.6L21.2 751.8L23 750.9L21 746.9L24.3 746.6Z" fill="#fff" stroke="#777" stroke-width="0.8" stroke-linejoin="round"/><ellipse cx="46.30" cy="738.10" rx="1.9" ry="3.6" fill="none" stroke="#000" stroke-width="1.4"/><rect x="48.50" y="736.90" width="13" height="2.2" fill="#000"/><rect x="56.90" y="739.00" width="1.7" height="3.6" fill="#000"/><rect x="59.50" y="739.00" width="2" height="3.6" fill="#000"/><rect x="57.30" y="741.30" width="3" height="1.3" fill="#000"/><circle cx="52.60" cy="750.50" r="3.50" fill="none" stroke="#ff0000" stroke-width="1"/><path d="M49.10 750.50H56.10M52.60 747.00V754.00" fill="none" stroke="#ff0000" stroke-width="0.90" /><ellipse cx="11.10" cy="785.30" rx="1.9" ry="3.6" fill="none" stroke="#000" stroke-width="1.4"/><rect x="13.30" y="784.10" width="13" height="2.2" fill="#000"/><rect x="21.70" y="786.20" width="1.7" height="3.6" fill="#000"/><rect x="24.30" y="786.20" width="2" height="3.6" fill="#000"/><rect x="22.10" y="788.50" width="3" height="1.3" fill="#000"/></svg>
<div style="position:absolute;left:1153.2px;top:107.5px;width:2.3px;height:691px;background:#d2d2d2;"></div>
<div style="position:absolute;left:1152.8px;top:733px;width:2.5px;height:65px;background:linear-gradient(90deg,#b2b2b2,#cacaca);"></div>
<div style="position:absolute;left:1155px;top:107.5px;width:300px;height:22px;background:linear-gradient(#ededed,#e1e1e1);border-bottom:1px solid #bdbdbd;"></div>
<span class="t" style="left:1284.70px;top:113.48px;font-size:11.60px;letter-spacing:0.038px;color:#222;">Lista de capas</span>
<svg width="40" height="16" viewBox="1156 110 40 16" style="left:1156px;top:110px"><circle cx="1164" cy="118" r="6.7" fill="#6c6c6c"/><path d="M1161.3 115.3L1166.7 120.7M1166.7 115.3L1161.3 120.7" stroke="#fff" stroke-width="2.3" stroke-linecap="round"/><circle cx="1182" cy="118" r="6.7" fill="#6c6c6c"/><path d="M1180.3 116.2V115H1185.4V119.2H1184.2" fill="none" stroke="#fff" stroke-width="1.1"/><rect x="1178.6" y="116.9" width="5" height="4.1" fill="none" stroke="#fff" stroke-width="1.2"/></svg>
<div style="position:absolute;left:1154.8px;top:130.5px;width:60.4px;height:25.5px;background:linear-gradient(#e4e4e4 0%,#ececec 40%,#f6f6f6 100%);border:1px solid #9b9b9b;box-sizing:border-box;"></div>
<div style="position:absolute;left:1214.8px;top:130.5px;width:60.4px;height:25.5px;background:linear-gradient(#e4e4e4 0%,#ececec 40%,#f6f6f6 100%);border:1px solid #9b9b9b;box-sizing:border-box;"></div>
<div style="position:absolute;left:1274.8px;top:130.5px;width:60.4px;height:25.5px;background:linear-gradient(#e4e4e4 0%,#ececec 40%,#f6f6f6 100%);border:1px solid #9b9b9b;box-sizing:border-box;"></div>
<div style="position:absolute;left:1334.8px;top:130.5px;width:60.4px;height:25.5px;background:linear-gradient(#e4e4e4 0%,#ececec 40%,#f6f6f6 100%);border:1px solid #9b9b9b;box-sizing:border-box;"></div>
<div style="position:absolute;left:1394.8px;top:130.5px;width:60.4px;height:25.5px;background:linear-gradient(#e4e4e4 0%,#ececec 40%,#f6f6f6 100%);border:1px solid #9b9b9b;box-sizing:border-box;"></div>
<div style="position:absolute;left:1155.5px;top:156px;width:299px;height:642px;background:#fff;border-left:1px solid #d4d4d4;border-right:1px solid #c9c9c9;border-top:1px solid #a9a9a9;box-sizing:border-box;"></div>
<div style="position:absolute;left:1161px;top:162.8px;width:16px;height:8.6px;background:#fff;border:1px solid #000;box-sizing:border-box;"></div>
<span class="t" style="left:1183.00px;top:161.30px;font-size:13.00px;color:#111;">0</span>
<div style="position:absolute;left:1161px;top:182.8px;width:16px;height:8.6px;background:#ff0000;border:1px solid #000;box-sizing:border-box;"></div>
<span class="t" style="left:1183.00px;top:181.30px;font-size:13.00px;letter-spacing:0.096px;color:#111;">Center</span>
<div style="position:absolute;left:1161px;top:202.8px;width:16px;height:8.6px;background:#000;border:1px solid #000;box-sizing:border-box;"></div>
<span class="t" style="left:1183.00px;top:201.30px;font-size:13.00px;letter-spacing:0.261px;color:#111;">Hidden</span>
<div style="position:absolute;left:1161px;top:222.8px;width:16px;height:8.6px;background:#fff;border:1px solid #000;box-sizing:border-box;"></div>
<span class="t" style="left:1183.00px;top:221.30px;font-size:13.00px;letter-spacing:0.073px;color:#111;">Visible</span>
<svg width="300" height="130" viewBox="1155 130 300 130" style="left:1155px;top:130px"><g transform="translate(1185.00 142.80) scale(1.030)"><path d="M-7.4 0.2C-5 -4.2 -1.8 -5.6 0.2 -5.6C3.4 -5.6 6 -3.4 7.4 -0.6C6.4 2.6 3.4 5.2 0 5.2C-3.4 5.2 -6 3 -7.4 0.2Z" fill="#000"/><path d="M-4.3 -0.6C-3.6 1.9 -1.9 3.5 0.2 3.5C2.5 3.5 4 1.7 4.5 -0.6C3.3 -2.1 1.8 -2.7 0.2 -2.7C-1.5 -2.7 -3.2 -1.9 -4.3 -0.6Z" fill="#fff"/><circle cx="0.1" cy="-0.7" r="2.7" fill="#000"/><circle cx="-0.8" cy="-1.5" r="0.7" fill="#fff" opacity=".7"/></g><g transform="translate(1245.00 142.80) scale(1.000)"><path d="M-7.4 0.2C-5 -4.2 -1.8 -5.6 0.2 -5.6C3.4 -5.6 6 -3.4 7.4 -0.6C6.4 2.6 3.4 5.2 0 5.2C-3.4 5.2 -6 3 -7.4 0.2Z" fill="#a9a9a9"/><path d="M-4.3 -0.6C-3.6 1.9 -1.9 3.5 0.2 3.5C2.5 3.5 4 1.7 4.5 -0.6C3.3 -2.1 1.8 -2.7 0.2 -2.7C-1.5 -2.7 -3.2 -1.9 -4.3 -0.6Z" fill="#fff"/><circle cx="0.1" cy="-0.7" r="2.7" fill="#a9a9a9"/><circle cx="-0.8" cy="-1.5" r="0.7" fill="#fff" opacity=".7"/></g><path d="M1303.7 137H1306.3V141.7H1311V144.3H1306.3V149H1303.7V144.3H1299V141.7H1303.7Z" fill="#f00000" stroke="#7a0000" stroke-width="0.4"/><rect x="1359.2" y="141.6" width="11.6" height="2.7" fill="#f00000" stroke="#7a0000" stroke-width="0.4"/><path d="M1418.20 149.60 L1421.61 148.24 L1419.66 146.23 Z" fill="#e8c88c"/><path d="M1418.20 149.60 L1419.40 149.12 L1418.72 148.41 Z" fill="#4a3010"/><path d="M1421.61 148.24 L1430.68 139.43 L1428.73 137.42 L1419.66 146.23 Z" fill="#e2a024"/><path d="M1421.61 148.24 L1430.68 139.43 L1430.05 138.78 L1420.98 147.58 Z" fill="#b9780f"/><path d="M1430.68 139.43 L1432.98 137.20 L1431.02 135.20 L1428.73 137.42 Z" fill="#e8282a"/><g transform="translate(1422.90 166.60) scale(0.970)"><path d="M-7.4 0.2C-5 -4.2 -1.8 -5.6 0.2 -5.6C3.4 -5.6 6 -3.4 7.4 -0.6C6.4 2.6 3.4 5.2 0 5.2C-3.4 5.2 -6 3 -7.4 0.2Z" fill="#000"/><path d="M-4.3 -0.6C-3.6 1.9 -1.9 3.5 0.2 3.5C2.5 3.5 4 1.7 4.5 -0.6C3.3 -2.1 1.8 -2.7 0.2 -2.7C-1.5 -2.7 -3.2 -1.9 -4.3 -0.6Z" fill="#fff"/><circle cx="0.1" cy="-0.7" r="2.7" fill="#000"/><circle cx="-0.8" cy="-1.5" r="0.7" fill="#fff" opacity=".7"/></g><path d="M1441.70 166.80V163.40A3.3 3.3 0 0 1 1448.30 163.40V166.80" fill="#fff" stroke="#c4c4c4" stroke-width="1.2"/><rect x="1440.10" y="166.10" width="9.8" height="7.6" fill="#b6b6b6"/><g transform="translate(1422.90 186.70) scale(0.970)"><path d="M-7.4 0.2C-5 -4.2 -1.8 -5.6 0.2 -5.6C3.4 -5.6 6 -3.4 7.4 -0.6C6.4 2.6 3.4 5.2 0 5.2C-3.4 5.2 -6 3 -7.4 0.2Z" fill="#000"/><path d="M-4.3 -0.6C-3.6 1.9 -1.9 3.5 0.2 3.5C2.5 3.5 4 1.7 4.5 -0.6C3.3 -2.1 1.8 -2.7 0.2 -2.7C-1.5 -2.7 -3.2 -1.9 -4.3 -0.6Z" fill="#fff"/><circle cx="0.1" cy="-0.7" r="2.7" fill="#000"/><circle cx="-0.8" cy="-1.5" r="0.7" fill="#fff" opacity=".7"/></g><path d="M1441.70 186.90V183.50A3.3 3.3 0 0 1 1448.30 183.50V186.90" fill="#fff" stroke="#c4c4c4" stroke-width="1.2"/><rect x="1440.10" y="186.20" width="9.8" height="7.6" fill="#b6b6b6"/><g transform="translate(1422.90 206.70) scale(0.970)"><path d="M-7.4 0.2C-5 -4.2 -1.8 -5.6 0.2 -5.6C3.4 -5.6 6 -3.4 7.4 -0.6C6.4 2.6 3.4 5.2 0 5.2C-3.4 5.2 -6 3 -7.4 0.2Z" fill="#000"/><path d="M-4.3 -0.6C-3.6 1.9 -1.9 3.5 0.2 3.5C2.5 3.5 4 1.7 4.5 -0.6C3.3 -2.1 1.8 -2.7 0.2 -2.7C-1.5 -2.7 -3.2 -1.9 -4.3 -0.6Z" fill="#fff"/><circle cx="0.1" cy="-0.7" r="2.7" fill="#000"/><circle cx="-0.8" cy="-1.5" r="0.7" fill="#fff" opacity=".7"/></g><path d="M1441.70 206.90V203.50A3.3 3.3 0 0 1 1448.30 203.50V206.90" fill="#fff" stroke="#c4c4c4" stroke-width="1.2"/><rect x="1440.10" y="206.20" width="9.8" height="7.6" fill="#b6b6b6"/><g transform="translate(1422.90 226.80) scale(0.970)"><path d="M-7.4 0.2C-5 -4.2 -1.8 -5.6 0.2 -5.6C3.4 -5.6 6 -3.4 7.4 -0.6C6.4 2.6 3.4 5.2 0 5.2C-3.4 5.2 -6 3 -7.4 0.2Z" fill="#000"/><path d="M-4.3 -0.6C-3.6 1.9 -1.9 3.5 0.2 3.5C2.5 3.5 4 1.7 4.5 -0.6C3.3 -2.1 1.8 -2.7 0.2 -2.7C-1.5 -2.7 -3.2 -1.9 -4.3 -0.6Z" fill="#fff"/><circle cx="0.1" cy="-0.7" r="2.7" fill="#000"/><circle cx="-0.8" cy="-1.5" r="0.7" fill="#fff" opacity=".7"/></g><path d="M1441.70 227.00V223.60A3.3 3.3 0 0 1 1448.30 223.60V227.00" fill="#fff" stroke="#c4c4c4" stroke-width="1.2"/><rect x="1440.10" y="226.30" width="9.8" height="7.6" fill="#b6b6b6"/><path d="M1394.60 233.00 L1397.96 231.60 L1396.17 229.71 Z" fill="#e8c88c"/><path d="M1394.60 233.00 L1395.78 232.50 L1395.16 231.84 Z" fill="#4a3010"/><path d="M1397.96 231.60 L1405.78 224.15 L1403.99 222.27 L1396.17 229.71 Z" fill="#e2a024"/><path d="M1397.96 231.60 L1405.78 224.15 L1405.20 223.54 L1397.38 230.98 Z" fill="#b9780f"/><path d="M1405.78 224.15 L1408.10 221.94 L1406.30 220.06 L1403.99 222.27 Z" fill="#e8282a"/></svg>
<div style="position:absolute;left:1455px;top:107.5px;width:45px;height:691px;background:linear-gradient(90deg,#f0f0f0 0%,#e6e6e6 30%,#d2d2d2 75%,#c4c4c4 100%);"></div>
<div style="position:absolute;left:1456.3px;top:120.3px;width:42.4px;height:42px;background:#b5b5b5;border-radius:6px;"></div>
<div style="position:absolute;left:1456.3px;top:417.4px;width:42.4px;height:42.4px;background:#b5b5b5;border-radius:6px;"></div>
<div style="position:absolute;left:1462.3px;top:116.3px;width:1.6px;height:1.6px;background:#a8a8a8;border-radius:1px"></div><div style="position:absolute;left:1468.3px;top:116.3px;width:1.6px;height:1.6px;background:#a8a8a8;border-radius:1px"></div><div style="position:absolute;left:1474.4px;top:116.3px;width:1.6px;height:1.6px;background:#a8a8a8;border-radius:1px"></div><div style="position:absolute;left:1480.5px;top:116.3px;width:1.6px;height:1.6px;background:#a8a8a8;border-radius:1px"></div><div style="position:absolute;left:1486.5px;top:116.3px;width:1.6px;height:1.6px;background:#a8a8a8;border-radius:1px"></div>
<div style="position:absolute;left:1458px;top:261.2px;width:40px;height:1px;background:repeating-linear-gradient(90deg,#666 0 1px,transparent 1px 2.9px);"></div>
<div style="position:absolute;left:1458px;top:409.2px;width:40px;height:1px;background:repeating-linear-gradient(90deg,#666 0 1px,transparent 1px 2.9px);"></div>
<svg width="45" height="692" viewBox="1455 107 45 692" style="left:1455px;top:107px"><rect x="1463.5" y="127.40" width="27" height="27" fill="#fff" stroke="#000" stroke-width="0.9"/><rect x="1463.5" y="127.40" width="27" height="4.2" fill="#000"/><rect x="1464.6" y="128.20" width="2.6" height="2.6" fill="#fff"/><rect x="1463.5" y="174.40" width="27" height="27" fill="#fff" stroke="#000" stroke-width="0.9"/><rect x="1463.5" y="174.40" width="27" height="4.2" fill="#000"/><rect x="1464.6" y="175.20" width="2.6" height="2.6" fill="#fff"/><rect x="1463.5" y="220.60" width="27" height="27" fill="#fff" stroke="#000" stroke-width="0.9"/><rect x="1463.5" y="220.60" width="27" height="4.2" fill="#000"/><rect x="1464.6" y="221.40" width="2.6" height="2.6" fill="#fff"/><rect x="1463.5" y="276.20" width="27" height="27" fill="#fff" stroke="#000" stroke-width="0.9"/><rect x="1463.5" y="276.20" width="27" height="4.2" fill="#000"/><rect x="1464.6" y="277.00" width="2.6" height="2.6" fill="#fff"/><rect x="1463.5" y="322.30" width="27" height="27" fill="#fff" stroke="#000" stroke-width="0.9"/><rect x="1463.5" y="322.30" width="27" height="4.2" fill="#000"/><rect x="1464.6" y="323.10" width="2.6" height="2.6" fill="#fff"/><rect x="1463.5" y="368.60" width="27" height="27" fill="#fff" stroke="#000" stroke-width="0.9"/><rect x="1463.5" y="368.60" width="27" height="4.2" fill="#000"/><rect x="1464.6" y="369.40" width="2.6" height="2.6" fill="#fff"/><rect x="1463.5" y="424.40" width="27" height="27" fill="#fff" stroke="#000" stroke-width="0.9"/><rect x="1463.5" y="424.40" width="27" height="4.2" fill="#000"/><rect x="1464.6" y="425.20" width="2.6" height="2.6" fill="#fff"/><rect x="1463.5" y="471.30" width="27" height="27" fill="#fff" stroke="#000" stroke-width="0.9"/><rect x="1463.5" y="471.30" width="27" height="4.2" fill="#000"/><rect x="1464.6" y="472.10" width="2.6" height="2.6" fill="#fff"/><path d="M1471 139.4L1480 135.4V144.4L1471 148.9Z" fill="#d8d8d8" stroke="#555" stroke-width="0.7"/><path d="M1472.6 139.7L1481.6 135.7V144.7L1472.6 149.2Z" fill="#e4e4e4" stroke="#555" stroke-width="0.7"/><path d="M1474.4 140.0L1484 135.8V145.2L1474.4 149.6Z" fill="#fff" stroke="#555" stroke-width="0.7"/><path d="M1477 146.4L1481.6 139.0L1481.2 144.8Z" fill="none" stroke="#f04040" stroke-width="0.8"/><rect x="1470.4" y="184.7" width="10.4" height="7.2" fill="#f6ebb4" stroke="#555" stroke-width="0.8"/><circle cx="1479.4" cy="191.3" r="4.3" fill="#f6ebb4" fill-opacity=".9" stroke="#555" stroke-width="0.8"/><rect x="1468.6" y="230.4" width="16.8" height="11.2" rx="2.2" fill="#f5f4f0" stroke="#b9c9ea" stroke-width="0.9"/><rect x="1466.2" y="284.1" width="4.3" height="3.4" fill="#000"/><rect x="1473.4" y="284.3" width="13.8" height="3" fill="#fff" stroke="#222" stroke-width="0.6"/><rect x="1466.2" y="290.1" width="4.3" height="3.4" fill="#000"/><rect x="1473.4" y="290.3" width="13.8" height="3" fill="#fff" stroke="#222" stroke-width="0.6"/><rect x="1466.2" y="296.1" width="4.3" height="3.4" fill="#000"/><rect x="1473.4" y="296.3" width="13.8" height="3" fill="#fff" stroke="#222" stroke-width="0.6"/><path d="M1469.6 332.1Q1477 328.9 1484.6 332.1L1479 338.3V345.3L1476 343.9V338.3Z" fill="#b4b4b4" stroke="#666" stroke-width="0.6"/><ellipse cx="1477.1" cy="332.2" rx="7.4" ry="1.7" fill="#8c8c8c"/><path d="M1469.4 376.2L1473.6 380.0H1484.6Q1486.2 383.0 1484.6 386.2H1473.6L1469.4 390.0Z" fill="#c9c9c9" stroke="#555" stroke-width="0.7"/><rect x="1476.5" y="380.0" width="8.6" height="6.2" fill="#8f8f8f"/><path d="M1467.6 383.1H1487" stroke="#f08c8c" stroke-width="0.8" stroke-dasharray="3 1 1 1"/><path d="M1466.0 433.0H1479.6" stroke="#9a9a9a" stroke-width="1.5" stroke-dasharray="4.6 0.8 3 0.6"/><path d="M1466.0 436.3H1478.6" stroke="#9a9a9a" stroke-width="1.5" stroke-dasharray="4.6 0.8 3 0.6"/><path d="M1466.0 439.6H1481.2" stroke="#9a9a9a" stroke-width="1.5" stroke-dasharray="4.6 0.8 3 0.6"/><path d="M1466.0 442.9H1482.4" stroke="#9a9a9a" stroke-width="1.5" stroke-dasharray="4.6 0.8 3 0.6"/><path d="M1463.5 446.8H1490.5" stroke="#222" stroke-width="0.7"/><path d="M1465.6 449.3H1467.8M1472.6 449.3H1488" stroke="#555" stroke-width="1.3"/><rect x="1470.5" y="480.5" width="12.6" height="13.6" rx="1" fill="#c98d3c" stroke="#9a6a23" stroke-width="0.6"/><rect x="1471.9" y="482.2" width="9.8" height="10.8" fill="#f4f4f4"/><rect x="1474" y="479.2" width="5.6" height="2.6" rx="0.6" fill="#a9a9a0"/><path d="M1473.4 484.9h6.6m-6.6 1.8h6.6m-6.6 1.8h5" stroke="#d0d0d0" stroke-width="0.7"/><path d="M1481.7 489.7v3.3h-3.3z" fill="#aeaeae"/></svg>
<div style="position:absolute;left:0px;top:798px;width:1500px;height:46px;background:#dcdcdc;"></div>
<span class="t" style="left:2.50px;top:807.99px;font-size:9.70px;letter-spacing:0.307px;color:#1c1c1c;-webkit-text-stroke:0.25px #1c1c1c;">26,38</span>
<span class="t" style="left:2.60px;top:826.47px;font-size:11.50px;color:#1c1c1c;">-</span>
<div style="position:absolute;left:253px;top:802px;width:1px;height:39.5px;background:#8a8a8a;"></div>
<div style="position:absolute;left:254px;top:802px;width:1px;height:39.5px;background:#ededed;"></div>
<span class="t" style="left:256.50px;top:807.99px;font-size:9.70px;letter-spacing:0.510px;color:#1c1c1c;-webkit-text-stroke:0.25px #1c1c1c;">46.0435&lt;56°</span>
<span class="t" style="left:256.60px;top:826.47px;font-size:11.50px;color:#1c1c1c;">-</span>
<span class="t" style="left:661.00px;top:817.79px;font-size:9.70px;letter-spacing:0.119px;color:#1c1c1c;-webkit-text-stroke:0.25px #1c1c1c;">Posición</span>
<span class="t" style="left:754.30px;top:817.79px;font-size:9.70px;letter-spacing:0.026px;color:#1c1c1c;-webkit-text-stroke:0.25px #1c1c1c;">Cancelar</span>
<span class="t" style="left:949.00px;top:817.79px;font-size:9.70px;letter-spacing:0.255px;color:#1c1c1c;-webkit-text-stroke:0.25px #1c1c1c;">No hay entidades seleccionadas.</span>
<div style="position:absolute;left:506.5px;top:819.3px;width:6px;height:6px;background:#cccccc;border-radius:3px;"></div>
<div style="position:absolute;left:940px;top:819.3px;width:6px;height:6px;background:#cccccc;border-radius:3px;"></div>
<div style="position:absolute;left:1269px;top:819.3px;width:6px;height:6px;background:#cccccc;border-radius:3px;"></div>
<svg width="22" height="34" viewBox="715 804 22 34" style="left:715px;top:804px"><rect x="717.2" y="806.1" width="17.4" height="29.4" rx="8.7" fill="#fff" stroke="#444" stroke-width="0.8"/><path d="M717.2 819.6Q726 817.6 734.6 819.6" fill="none" stroke="#444" stroke-width="1"/><path d="M726 806.2V818.6" stroke="#444" stroke-width="0.8"/><rect x="724.7" y="808" width="2.7" height="7.6" rx="1.3" fill="#fff" stroke="#444" stroke-width="0.8"/></svg>
<div style="position:absolute;left:0px;top:797.5px;width:1500px;height:1px;background:#ebebeb;"></div>
<svg width="1500" height="110" viewBox="0 0 1500 110" style="left:0;top:0;overflow:hidden"><defs>
<linearGradient id="gPaper" x1="0" y1="0" x2="1" y2="1"><stop offset="0" stop-color="#ffffff"/><stop offset="1" stop-color="#ececec"/></linearGradient>
<radialGradient id="gGlow"><stop offset="0" stop-color="#ffffff"/><stop offset=".12" stop-color="#fffbd0"/><stop offset=".38" stop-color="#f2e92e"/><stop offset=".7" stop-color="#e6da0c" stop-opacity=".92"/><stop offset="1" stop-color="#ddd000" stop-opacity="0"/></radialGradient>
<linearGradient id="gSave" x1="0" y1="0" x2="1" y2="0"><stop offset="0" stop-color="#8dbbff"/><stop offset=".5" stop-color="#4b8ff8"/><stop offset="1" stop-color="#3a80f4"/></linearGradient>
<linearGradient id="gLabel" x1="0" y1="0" x2="1" y2="1"><stop offset="0" stop-color="#ffffff"/><stop offset=".5" stop-color="#e4e8fb"/><stop offset="1" stop-color="#ffffff"/></linearGradient>
<linearGradient id="gFolder" x1="0" y1="0" x2="0" y2="1"><stop offset="0" stop-color="#86aede"/><stop offset="1" stop-color="#4f87cc"/></linearGradient>
<linearGradient id="gPrn" x1="0" y1="0" x2="0" y2="1"><stop offset="0" stop-color="#f6f6f6"/><stop offset="1" stop-color="#c2c2c2"/></linearGradient>
<linearGradient id="gUndo" x1="0" y1="0" x2="1" y2="1"><stop offset="0" stop-color="#a6dc78"/><stop offset=".6" stop-color="#46ae4e"/><stop offset="1" stop-color="#1f9440"/></linearGradient>
<linearGradient id="gLens" x1="0" y1="0" x2="0" y2="1"><stop offset="0" stop-color="#9bbce8"/><stop offset=".48" stop-color="#7faae4"/><stop offset=".52" stop-color="#5f97df"/><stop offset="1" stop-color="#7db2ee"/></linearGradient>
<linearGradient id="gClipP" x1="0" y1="0" x2="1" y2="1"><stop offset="0" stop-color="#ffffff"/><stop offset="1" stop-color="#e2e2e2"/></linearGradient>
<linearGradient id="gPencilY" x1="0" y1="0" x2="0" y2="1"><stop offset="0" stop-color="#ffd24a"/><stop offset="1" stop-color="#f59a00"/></linearGradient>
</defs><g transform="translate(0 24) scale(0.099602)" ><path d="M275 118V285L318 245L352 325L380 312L345 238L388 232Z" fill="#fff" stroke="#333" stroke-width="12" stroke-linejoin="round"/></g><g transform="translate(92 24) scale(0.066667)" ><rect x="112" y="536" width="390" height="18" rx="9" fill="#6c6c6c" opacity=".7"/><rect x="124" y="124" width="366" height="420" rx="12" fill="url(#gPaper)" stroke="#8d8d8d" stroke-width="9"/><path d="M152 272h22M152 385h22" stroke="#d4d4d4" stroke-width="8"/><circle cx="432" cy="205" r="102" fill="url(#gGlow)"/><path d="M772 168Q772 158 785 158H880L900 300L822 488H800Z" fill="#a9a9a9" stroke="#7c7c7c" stroke-width="8"/><path d="M800 200L815 440" stroke="#d4d4d4" stroke-width="10"/><path d="M878 125H1195V190L1160 300H838Z" fill="url(#gPaper)" stroke="#8a8a8a" stroke-width="8"/><path d="M925 178H1150M905 235H1140" stroke="#c9c9c9" stroke-width="24"/><path d="M872 290H1240L1176 500H812Q850 400 872 290Z" fill="url(#gFolder)" stroke="#4a7cbc" stroke-width="8" stroke-linejoin="round"/></g><g transform="translate(192 24) scale(0.066667)" ><rect x="155" y="138" width="370" height="382" rx="34" fill="url(#gSave)" stroke="#2323a4" stroke-width="13"/><rect x="210" y="158" width="266" height="168" fill="url(#gLabel)"/><rect x="238" y="362" width="178" height="142" fill="#dfdfe6"/><rect x="268" y="396" width="28" height="66" fill="#2c62da"/><rect x="421" y="362" width="28" height="106" fill="#1c5ce2"/><rect x="848" y="138" width="370" height="382" rx="34" fill="url(#gSave)" stroke="#2323a4" stroke-width="13"/><rect x="903" y="158" width="266" height="168" fill="url(#gLabel)"/><rect x="931" y="362" width="178" height="142" fill="#dfdfe6"/><rect x="961" y="396" width="28" height="66" fill="#2c62da"/><rect x="1114" y="362" width="28" height="106" fill="#1c5ce2"/><path d="M1000.0 400.0 L1084.9 362.5 L1259.2 173.1 L1204.8 122.9 L1030.4 312.3 Z" fill="url(#gPencilY)" stroke="#a23a10" stroke-width="8.9" stroke-linejoin="round"/><path d="M1000.0 400.0 L1082.7 360.4 L1032.6 314.3 Z" fill="#f4dcb4"/><path d="M1000.0 400.0 L1031.7 385.2 L1012.1 367.2 Z" fill="#222"/><path d="M1052.2 332.4 L1226.6 143.0 L1212.9 130.5 L1038.6 319.8 Z" fill="#fff" opacity=".35"/><path d="M1188 150L1232 148L1258 176L1240 215Z" fill="#e03020" stroke="#a23a10" stroke-width="7"/></g><g transform="translate(292 24) scale(0.073314)" ><path d="M340 290L340 172" stroke="#000" stroke-width="66" stroke-linecap="round"/><circle cx="340" cy="172" r="44" fill="#000"/><path d="M340 290L258 222" stroke="#000" stroke-width="66" stroke-linecap="round"/><circle cx="258" cy="222" r="44" fill="#000"/><path d="M340 290L422 222" stroke="#000" stroke-width="66" stroke-linecap="round"/><circle cx="422" cy="222" r="44" fill="#000"/><path d="M340 290L205 282M340 290L475 282" stroke="#000" stroke-width="60" stroke-linecap="round"/><rect x="175" y="275" width="330" height="190" rx="36" fill="#000"/><path d="M340 284L340 172" stroke="#ffb13b" stroke-width="30" stroke-linecap="round"/><circle cx="340" cy="172" r="25" fill="#ffb13b"/><path d="M340 284L258 222" stroke="#ffb13b" stroke-width="30" stroke-linecap="round"/><circle cx="258" cy="222" r="25" fill="#ffb13b"/><path d="M340 284L422 222" stroke="#ffb13b" stroke-width="30" stroke-linecap="round"/><circle cx="422" cy="222" r="25" fill="#ffb13b"/><rect x="200" y="270" width="280" height="28" rx="6" fill="#ffb13b"/><text x="213" y="442" font-size="168" font-weight="bold" fill="#fff" textLength="258" lengthAdjust="spacingAndGlyphs">SVG</text><rect x="978" y="112" width="252" height="200" rx="8" fill="#eeeeee" stroke="#c0c0c0" stroke-width="8"/><rect x="1150" y="150" width="62" height="125" fill="#d9d9d9"/><ellipse cx="1105" cy="462" rx="175" ry="13" fill="#666" opacity=".5"/><path d="M950 268H1258L1290 330V438Q1290 456 1272 456H933Q915 456 915 438V330Z" fill="url(#gPrn)" stroke="#a6a6a6" stroke-width="7"/><path d="M958 300H1250L1268 352H940Z" fill="#fcfcfc" stroke="#c9c9c9" stroke-width="5"/><path d="M1108 292L1203 370" stroke="#8a8a8a" stroke-width="42" stroke-linecap="round"/><path d="M1114 290L1203 364" stroke="#dcdcdc" stroke-width="15" stroke-linecap="round"/><circle cx="1045" cy="225" r="93" fill="#fafafa" stroke="#b9b9b9" stroke-width="7"/><circle cx="1045" cy="225" r="71" fill="#b4cbea" stroke="#4a80d2" stroke-width="14"/><ellipse cx="1030" cy="198" rx="42" ry="27" fill="#fff" opacity=".5"/></g><g transform="translate(402 24) scale(0.073314)" ><path d="M160 180L215 243C260 170 330 128 400 130C490 133 550 200 548 290C545 380 450 450 335 470L328 452C420 430 498 390 495 325C492 265 450 235 405 237C350 240 310 265 275 305L340 380L160 380Z" fill="url(#gUndo)" stroke="#1c8a3c" stroke-width="11" stroke-linejoin="round"/><g transform="translate(1335.5 0) scale(-1 1)" opacity=".45"><path d="M160 180L215 243C260 170 330 128 400 130C490 133 550 200 548 290C545 380 450 450 335 470L328 452C420 430 498 390 495 325C492 265 450 235 405 237C350 240 310 265 275 305L340 380L160 380Z" fill="url(#gUndo)" stroke="#1c8a3c" stroke-width="11" stroke-linejoin="round"/></g></g><g transform="translate(505 24) scale(0.073314)" ><ellipse cx="345" cy="452" rx="175" ry="20" fill="#fff" opacity=".55"/><ellipse cx="290" cy="455" rx="90" ry="9" fill="#999" opacity=".5"/><g opacity=".8"><path d="M430 125L510 205L255 455L170 375Z" fill="#df6f72"/><path d="M456 151L484 179L229 429L201 401Z" fill="#f6f6f6"/><path d="M218 328L300 410L255 455L170 375Z" fill="#f7f7f7" stroke="#c9c9c9" stroke-width="6"/><path d="M430 125L510 205" stroke="#8c8c8c" stroke-width="9"/></g><g opacity=".8"><path d="M1095 112L1155 95L1136 300L1086 292Z" fill="#f6f6f6" stroke="#a9a9a9" stroke-width="8"/><path d="M1140 252L1284 180L1292 224L1142 302Z" fill="#f6f6f6" stroke="#a9a9a9" stroke-width="8"/><path d="M1040 300L1112 292M1122 350L1112 292" stroke="#e27476" stroke-width="26" stroke-linecap="round"/><ellipse cx="985" cy="328" rx="64" ry="40" transform="rotate(-18 985 328)" fill="none" stroke="#e27476" stroke-width="24"/><ellipse cx="1136" cy="420" rx="42" ry="72" transform="rotate(-6 1136 420)" fill="none" stroke="#e27476" stroke-width="24"/></g><path d="M918 458H1002M960 416V500" stroke="#444" stroke-width="10"/></g><g transform="translate(610 24) scale(0.073314)" ><g opacity=".9"><rect x="98" y="88" width="292" height="342" rx="20" fill="#f3f3f3" stroke="#d3d3d3" stroke-width="8"/><path d="M150 180H215M150 215H215M150 252H215M150 290H215M150 328H215" stroke="#dddddd" stroke-width="12"/><path d="M232 168H480Q500 168 500 188V432L422 510H232Q212 510 212 490V188Q212 168 232 168Z" fill="url(#gPaper)" stroke="#c4c4c4" stroke-width="8"/><path d="M422 510V452Q422 432 442 432H500Z" fill="#d4d4d4" stroke="#c0c0c0" stroke-width="5"/><path d="M270 265H460M270 300H450M270 335H430M270 375H460" stroke="#d2d2d2" stroke-width="12"/></g><path d="M113 445H197M155 403V487" stroke="#333" stroke-width="11"/><rect x="742" y="122" width="362" height="376" rx="16" fill="#cd8620" stroke="#9c6616" stroke-width="9"/><rect x="788" y="142" width="280" height="326" fill="url(#gClipP)"/><path d="M835 225H1022M835 265H1015M835 300H995M835 335H1022M835 375H952" stroke="#bdbdbd" stroke-width="12"/><path d="M1068 398V468H985Z" fill="#9f9f9f"/><path d="M985 468V410Q985 398 998 398H1068Z" fill="#c9c9c9"/><path d="M838 122H876V88H976V122H1010V178Q1010 186 1002 186H846Q838 186 838 178Z" fill="#b0b0a2" stroke="#7e7e72" stroke-width="7"/><path d="M846 132H1002" stroke="#d8d8cc" stroke-width="8"/></g><g transform="translate(-23.154 69.110) scale(0.06409 0.06303)"><rect x="742" y="122" width="362" height="376" rx="16" fill="#cd8620" stroke="#9c6616" stroke-width="9"/><rect x="788" y="142" width="280" height="326" fill="url(#gClipP)"/><path d="M835 225H1022M835 265H1015M835 300H995M835 335H1022M835 375H952" stroke="#bdbdbd" stroke-width="12"/><path d="M1068 398V468H985Z" fill="#9f9f9f"/><path d="M985 468V410Q985 398 998 398H1068Z" fill="#c9c9c9"/><path d="M838 122H876V88H976V122H1010V178Q1010 186 1002 186H846Q838 186 838 178Z" fill="#b0b0a2" stroke="#7e7e72" stroke-width="7"/><path d="M846 132H1002" stroke="#d8d8cc" stroke-width="8"/></g><g transform="translate(710 24) scale(0.073314)" ><path d="M195.0 432.0 L290.5 393.9 L469.1 213.9 L410.9 156.1 L232.3 336.2 Z" fill="#e8201c" stroke="#7a4a10" stroke-width="9.8" stroke-linejoin="round"/><path d="M195.0 432.0 L288.2 391.6 L234.6 338.5 Z" fill="#f0d2a8"/><path d="M195.0 432.0 L230.7 417.0 L209.8 396.2 Z" fill="#222"/><path d="M255.6 359.3 L434.2 179.2 L419.6 164.8 L241.0 344.8 Z" fill="#fff" opacity=".35"/><path d="M413.8 266.8 L433.4 247.0 L378.0 192.2 L358.4 211.9 Z" fill="#d8d8d8"/><rect x="178" y="432" width="300" height="16" fill="#ff0000"/><rect x="760" y="158" width="388" height="296" rx="10" fill="#000080" stroke="#20204c" stroke-width="10"/><path d="M810 405L1100 210" stroke="#fff" stroke-width="15"/><path d="M1100 210V405H810" stroke="#e6e6fa" stroke-width="15" stroke-dasharray="30 18" fill="none"/></g><g transform="translate(800 24) scale(0.073314)" ><circle cx="355" cy="298" r="180" fill="none" stroke="#000" stroke-width="27"/><path d="M165 490L545 105" stroke="#0000ff" stroke-width="14"/><rect x="953" y="120" width="30" height="30" fill="#111"/><rect x="953" y="230" width="30" height="30" fill="#111"/><rect x="953" y="340" width="30" height="30" fill="#111"/><rect x="953" y="450" width="30" height="30" fill="#111"/><rect x="1062" y="120" width="30" height="30" fill="#111"/><rect x="1062" y="230" width="30" height="30" fill="#111"/><rect x="1062" y="340" width="30" height="30" fill="#111"/><rect x="1062" y="450" width="30" height="30" fill="#111"/><rect x="1171" y="120" width="30" height="30" fill="#111"/><rect x="1171" y="230" width="30" height="30" fill="#111"/><rect x="1171" y="340" width="30" height="30" fill="#111"/><rect x="1171" y="450" width="30" height="30" fill="#111"/><rect x="1280" y="120" width="30" height="30" fill="#111"/><rect x="1280" y="230" width="30" height="30" fill="#111"/><rect x="1280" y="340" width="30" height="30" fill="#111"/><rect x="1280" y="450" width="30" height="30" fill="#111"/></g><g><ellipse cx="940.2" cy="58.8" rx="12" ry="1.8" fill="#000" opacity=".07"/><path d="M944.6 51.4L952.4 58.0" stroke="#6a6a6a" stroke-width="3.8" stroke-linecap="round"/><path d="M945.4 51.2L952.6 57.2" stroke="#a9a9a9" stroke-width="1.1" stroke-linecap="round"/><circle cx="936.2" cy="42.0" r="11.6" fill="#f3f3ee" stroke="#b5b5ae" stroke-width="0.7"/><circle cx="936.2" cy="42.0" r="9.5" fill="url(#gLens)" stroke="#d9d9d2" stroke-width="0.8"/><path d="M934.7 36.4h3v4.1h4.1v3h-4.1v4.1h-3v-4.1h-4.1v-3h4.1z" fill="#fff" stroke="#3f78cc" stroke-width="0.7" stroke-linejoin="round"/></g><g><ellipse cx="986.2" cy="58.8" rx="12" ry="1.8" fill="#000" opacity=".07"/><path d="M990.6 51.4L998.4 58.0" stroke="#6a6a6a" stroke-width="3.8" stroke-linecap="round"/><path d="M991.4 51.2L998.6 57.2" stroke="#a9a9a9" stroke-width="1.1" stroke-linecap="round"/><circle cx="982.2" cy="42.0" r="11.6" fill="#f3f3ee" stroke="#b5b5ae" stroke-width="0.7"/><circle cx="982.2" cy="42.0" r="9.5" fill="url(#gLens)" stroke="#d9d9d2" stroke-width="0.8"/><rect x="976.6" y="40.5" width="11.2" height="3" fill="#fff" stroke="#3f78cc" stroke-width="0.7" stroke-linejoin="round"/></g><g><ellipse cx="1032.1" cy="58.8" rx="12" ry="1.8" fill="#000" opacity=".07"/><path d="M1036.5 51.4L1044.3 58.0" stroke="#6a6a6a" stroke-width="3.8" stroke-linecap="round"/><path d="M1037.3 51.2L1044.5 57.2" stroke="#a9a9a9" stroke-width="1.1" stroke-linecap="round"/><circle cx="1028.1" cy="42.0" r="11.6" fill="#f3f3ee" stroke="#b5b5ae" stroke-width="0.7"/><circle cx="1028.1" cy="42.0" r="9.5" fill="url(#gLens)" stroke="#d9d9d2" stroke-width="0.8"/><rect x="1024.6" y="38.5" width="7" height="7" fill="#fff" opacity=".3"/><path d="M1022.1 36.0h4.6v2.4h-2.2v2.2h-2.4zM1022.1 48.0h4.6v-2.4h-2.2v-2.2h-2.4zM1034.1 36.0h-4.6v2.4h2.2v2.2h2.4zM1034.1 48.0h-4.6v-2.4h2.2v-2.2h2.4z" fill="#fff" stroke="#3f78cc" stroke-width="0.5"/></g><g opacity=".55"><ellipse cx="1078.3" cy="58.8" rx="12" ry="1.8" fill="#000" opacity=".07"/><path d="M1082.7 51.4L1090.5 58.0" stroke="#6a6a6a" stroke-width="3.8" stroke-linecap="round"/><path d="M1083.5 51.2L1090.7 57.2" stroke="#a9a9a9" stroke-width="1.1" stroke-linecap="round"/><circle cx="1074.3" cy="42.0" r="11.6" fill="#f3f3ee" stroke="#b5b5ae" stroke-width="0.7"/><circle cx="1074.3" cy="42.0" r="9.5" fill="url(#gLens)" stroke="#d9d9d2" stroke-width="0.8"/><rect x="1070.8" y="38.5" width="7" height="7" fill="#fff" opacity=".3"/><path d="M1068.3 36.0h4.6v2.4h-2.2v2.2h-2.4zM1068.3 48.0h4.6v-2.4h-2.2v-2.2h-2.4zM1080.3 36.0h-4.6v2.4h2.2v2.2h2.4zM1080.3 48.0h-4.6v-2.4h2.2v-2.2h2.4z" fill="#e8282a" stroke="#e8282a" stroke-width="0.5"/></g><g><ellipse cx="1124.2" cy="58.5" rx="12" ry="1.8" fill="#000" opacity=".07"/><path d="M1128.6 51.1L1136.4 57.7" stroke="#6a6a6a" stroke-width="3.8" stroke-linecap="round"/><path d="M1129.4 50.9L1136.6 56.9" stroke="#a9a9a9" stroke-width="1.1" stroke-linecap="round"/><circle cx="1120.2" cy="41.7" r="11.6" fill="#f3f3ee" stroke="#b5b5ae" stroke-width="0.7"/><circle cx="1120.2" cy="41.7" r="9.5" fill="url(#gLens)" stroke="#d9d9d2" stroke-width="0.8"/><path d="M1113.2 41.7l6.4 -5.6v3.2h6.6v4.8h-6.6v3.2z" fill="#fff" stroke="#3f78cc" stroke-width="0.7" stroke-linejoin="round"/></g><rect x="1154.3" y="30.6" width="27.2" height="17.4" rx="1.6" fill="#fff" stroke="#5c8fda" stroke-width="1"/><g><ellipse cx="1172.5" cy="61.8" rx="12" ry="1.8" fill="#000" opacity=".07"/><path d="M1176.9 54.4L1184.7 61.0" stroke="#6a6a6a" stroke-width="3.8" stroke-linecap="round"/><path d="M1177.7 54.2L1184.9 60.2" stroke="#a9a9a9" stroke-width="1.1" stroke-linecap="round"/><circle cx="1168.5" cy="45.0" r="9.8" fill="#f3f3ee" stroke="#b5b5ae" stroke-width="0.7"/><circle cx="1168.5" cy="45.0" r="8.0" fill="url(#gLens)" stroke="#d9d9d2" stroke-width="0.8"/></g><g><ellipse cx="1217.0" cy="59.9" rx="12" ry="1.8" fill="#000" opacity=".07"/><path d="M1221.4 52.5L1229.2 59.1" stroke="#6a6a6a" stroke-width="3.8" stroke-linecap="round"/><path d="M1222.2 52.3L1229.4 58.3" stroke="#a9a9a9" stroke-width="1.1" stroke-linecap="round"/><circle cx="1213.0" cy="43.1" r="11.3" fill="#f3f3ee" stroke="#b5b5ae" stroke-width="0.7"/><circle cx="1213.0" cy="43.1" r="9.5" fill="url(#gLens)" stroke="#d9d9d2" stroke-width="0.8"/><path transform="rotate(0 1213.0 43.1)" d="M1214.4 41.6h7.4v-2.1l4.2 3.6l-4.2 3.6v-2.1h-7.4z" fill="#fff" stroke="#3f78cc" stroke-width="0.7" stroke-linejoin="round"/><path transform="rotate(90 1213.0 43.1)" d="M1214.4 41.6h7.4v-2.1l4.2 3.6l-4.2 3.6v-2.1h-7.4z" fill="#fff" stroke="#3f78cc" stroke-width="0.7" stroke-linejoin="round"/><path transform="rotate(180 1213.0 43.1)" d="M1214.4 41.6h7.4v-2.1l4.2 3.6l-4.2 3.6v-2.1h-7.4z" fill="#fff" stroke="#3f78cc" stroke-width="0.7" stroke-linejoin="round"/><path transform="rotate(270 1213.0 43.1)" d="M1214.4 41.6h7.4v-2.1l4.2 3.6l-4.2 3.6v-2.1h-7.4z" fill="#fff" stroke="#3f78cc" stroke-width="0.7" stroke-linejoin="round"/></g><path d="M450 88L456.7 81.2V85.3H463.3V81.2L470 88L463.3 94.8V90.7H456.7V94.8Z" fill="#000"/><path d="M506 78L513 84.7H508.8V91.3H513L506 98L499 91.3H503.2V84.7H499Z" fill="#000"/><g transform="translate(1020 70) scale(0.053333)" ><path d="M688 528A196 196 0 1 0 530 215L470 150L470 355L670 350L610 290A90 90 0 1 1 688 432Z" fill="#ffdfa6" stroke="#c8851f" stroke-width="20" stroke-linejoin="round"/></g></svg>
<svg width="120" height="100" viewBox="150 40 120 100" style="left:150px;top:40px"><circle cx="202.4" cy="88" r="35" fill="#ffffff" fill-opacity=".10" stroke="#7f9fbe" stroke-opacity=".27" stroke-width="7.5"/><circle cx="202.4" cy="88" r="35" fill="none" stroke="#7f9fbe" stroke-opacity=".18" stroke-width="3.5"/><g transform="translate(150 40) scale(0.106667)" ><path d="M497 450V660L548 612L595 702L630 686L586 600L640 592Z" fill="#fff" stroke="#000" stroke-width="13" stroke-linejoin="round"/></g></svg>
</div></body></html>
